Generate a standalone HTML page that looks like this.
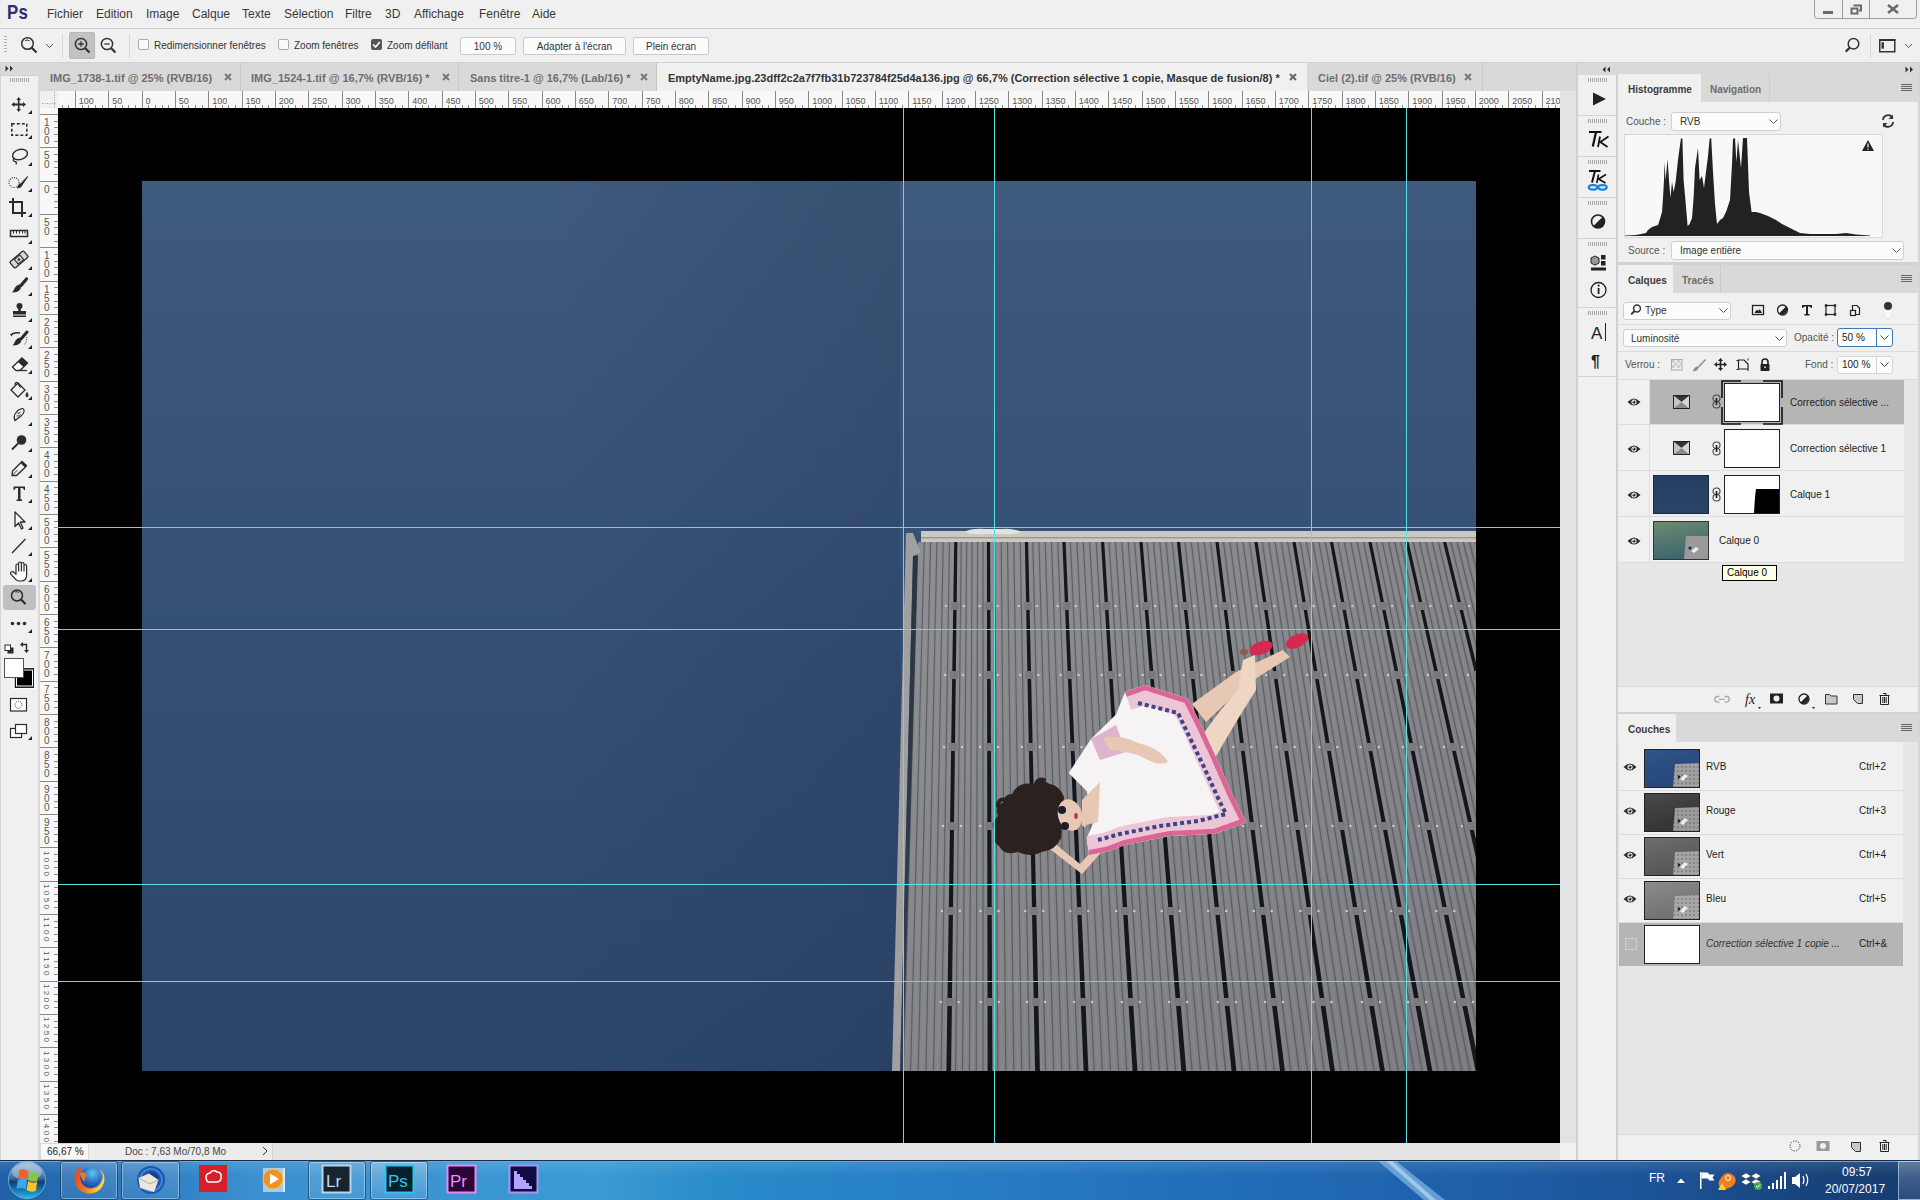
<!DOCTYPE html><html><head><meta charset="utf-8"><style>
*{margin:0;padding:0;box-sizing:border-box}
html,body{width:1920px;height:1200px;overflow:hidden;background:#f0f0f0;font-family:"Liberation Sans",sans-serif}
.a{position:absolute}
.t{position:absolute;white-space:nowrap;line-height:1}
svg{position:absolute;overflow:visible}
</style></head><body><div class="a" style="left:0px;top:0px;width:1920px;height:28px;background:#f0f0f0;"></div>
<div class="a" style="left:0px;top:28px;width:1920px;height:1px;background:#cfcfcf;"></div>
<div class="a" style="left:0px;top:29px;width:1920px;height:33px;background:#f0f0f0;"></div>
<div class="a" style="left:0px;top:62px;width:1920px;height:1px;background:#d2d2d2;"></div>
<div class="a" style="left:40px;top:63px;width:1537px;height:28px;background:#d9d9d9;"></div>
<div class="a" style="left:0px;top:63px;width:40px;height:1097px;background:#f0f0f0;"></div>
<div class="a" style="left:38px;top:63px;width:2px;height:1097px;background:#d9d9d9;"></div>
<div class="a" style="left:40px;top:91px;width:1520px;height:17px;background:#f8f8f8;"></div>
<div class="a" style="left:40px;top:108px;width:18px;height:1035px;background:#f8f8f8;"></div>
<div class="a" style="left:58px;top:108px;width:1502px;height:1035px;background:#000;"></div>
<div class="a" style="left:1560px;top:91px;width:16px;height:1069px;background:#e3e3e3;"></div>
<div class="a" style="left:1560px;top:1143px;width:16px;height:17px;background:#f0f0f0;"></div>
<div class="a" style="left:40px;top:1143px;width:1520px;height:17px;background:#e3e3e3;"></div>
<div class="a" style="left:1576px;top:63px;width:2px;height:1097px;background:#cfcfcf;"></div>
<div class="a" style="left:1578px;top:63px;width:342px;height:1097px;background:#f0f0f0;"></div>
<div class="a" style="left:1616px;top:75px;width:2px;height:1085px;background:#cfcfcf;"></div>
<div class="a" style="left:0px;top:1160px;width:1920px;height:40px;background:#1f5fa8;"></div>
<div class="t" style="left:7px;top:1px;font-size:21px;font-weight:bold;color:#2f2d6e;letter-spacing:0.5px;transform:scaleX(0.8);transform-origin:0 0">Ps</div>
<div class="t" style="left:47px;top:8px;font-size:12px;color:#3a3a3a;">Fichier</div>
<div class="t" style="left:96px;top:8px;font-size:12px;color:#3a3a3a;">Edition</div>
<div class="t" style="left:146px;top:8px;font-size:12px;color:#3a3a3a;">Image</div>
<div class="t" style="left:192px;top:8px;font-size:12px;color:#3a3a3a;">Calque</div>
<div class="t" style="left:242px;top:8px;font-size:12px;color:#3a3a3a;">Texte</div>
<div class="t" style="left:284px;top:8px;font-size:12px;color:#3a3a3a;">Sélection</div>
<div class="t" style="left:345px;top:8px;font-size:12px;color:#3a3a3a;">Filtre</div>
<div class="t" style="left:385px;top:8px;font-size:12px;color:#3a3a3a;">3D</div>
<div class="t" style="left:414px;top:8px;font-size:12px;color:#3a3a3a;">Affichage</div>
<div class="t" style="left:479px;top:8px;font-size:12px;color:#3a3a3a;">Fenêtre</div>
<div class="t" style="left:532px;top:8px;font-size:12px;color:#3a3a3a;">Aide</div>
<svg style="left:1814px;top:0px" width="104" height="20">
<path d="M0.5 0 V15.5 Q0.5 18.5 3.5 18.5 H99.5 Q102.5 18.5 102.5 15.5 V0" fill="none" stroke="#9a9a9a" stroke-width="1"/>
<line x1="28.5" y1="0" x2="28.5" y2="18.5" stroke="#9a9a9a"/>
<line x1="55.5" y1="0" x2="55.5" y2="18.5" stroke="#9a9a9a"/>
<rect x="9" y="11" width="10" height="3" fill="#6a6a6a"/>
<rect x="37.5" y="8.5" width="6" height="5" fill="none" stroke="#6a6a6a" stroke-width="2"/>
<path d="M40.5 6.5 V5.5 H47 V10.5 H45" fill="none" stroke="#6a6a6a" stroke-width="2"/>
<path d="M74 5 L84 13 M84 5 L74 13" stroke="#6a6a6a" stroke-width="2.6"/>
</svg>
<svg style="left:4px;top:35px" width="4" height="20"><path d="M0 1.5h3M0 4.5h3M0 7.5h3M0 10.5h3M0 13.5h3M0 16.5h3" stroke="#b0b0b0" stroke-width="1"/></svg>
<svg style="left:20px;top:36px" width="20" height="20">
<circle cx="7.5" cy="7.5" r="5.8" fill="none" stroke="#333" stroke-width="1.5"/>
<path d="M5 4.6 Q7.5 3.3 9.6 5" fill="none" stroke="#333" stroke-width="1"/>
<line x1="11.6" y1="11.6" x2="16.5" y2="16.5" stroke="#333" stroke-width="2.2"/>
</svg>
<svg style="left:45px;top:42px" width="10" height="8"><path d="M1 2 L4.5 5.5 L8 2" fill="none" stroke="#555" stroke-width="1"/></svg>
<div class="a" style="left:62px;top:34px;width:1px;height:24px;background:#d8d8d8;"></div>
<div class="a" style="left:69px;top:32px;width:26px;height:27px;background:#c2c2c2;border-radius:2px;border:1px solid #b8b8b8"></div>
<svg style="left:74px;top:37px" width="20" height="20">
<circle cx="7" cy="7" r="5.6" fill="none" stroke="#333" stroke-width="1.5"/>
<path d="M4.3 7h5.4M7 4.3v5.4" stroke="#333" stroke-width="1.3"/>
<line x1="11" y1="11" x2="15.5" y2="15.5" stroke="#333" stroke-width="2.2"/>
</svg>
<svg style="left:100px;top:37px" width="20" height="20">
<circle cx="7" cy="7" r="5.6" fill="none" stroke="#333" stroke-width="1.5"/>
<path d="M4.3 7h5.4" stroke="#333" stroke-width="1.3"/>
<line x1="11" y1="11" x2="15.5" y2="15.5" stroke="#333" stroke-width="2.2"/>
</svg>
<div class="a" style="left:129px;top:34px;width:1px;height:24px;background:#d8d8d8;"></div>
<div class="a" style="left:138px;top:39px;width:11px;height:11px;background:#fafafa;border:1px solid #aaa;border-radius:2px"></div>
<div class="t" style="left:154px;top:41px;font-size:10px;color:#333;">Redimensionner fenêtres</div>
<div class="a" style="left:278px;top:39px;width:11px;height:11px;background:#fafafa;border:1px solid #aaa;border-radius:2px"></div>
<div class="t" style="left:294px;top:41px;font-size:10px;color:#333;">Zoom fenêtres</div>
<div class="a" style="left:371px;top:39px;width:11px;height:11px;background:#555;border-radius:2px"></div>
<svg style="left:371px;top:39px" width="11" height="11"><path d="M2.2 5.6 L4.6 8 L8.8 3" fill="none" stroke="#fff" stroke-width="1.6"/></svg>
<div class="t" style="left:387px;top:41px;font-size:10px;color:#333;">Zoom défilant</div>
<div class="a" style="left:460px;top:37px;width:56px;height:18px;background:#fcfcfc;border:1px solid #c9c9c9;border-radius:2px"></div>
<div class="t" style="left:460px;top:42px;width:56px;text-align:center;font-size:10px;color:#333">100 %</div>
<div class="a" style="left:523px;top:37px;width:103px;height:18px;background:#fcfcfc;border:1px solid #c9c9c9;border-radius:2px"></div>
<div class="t" style="left:523px;top:42px;width:103px;text-align:center;font-size:10px;color:#333">Adapter à l'écran</div>
<div class="a" style="left:633px;top:37px;width:76px;height:18px;background:#fcfcfc;border:1px solid #c9c9c9;border-radius:2px"></div>
<div class="t" style="left:633px;top:42px;width:76px;text-align:center;font-size:10px;color:#333">Plein écran</div>
<svg style="left:1844px;top:37px" width="20" height="20">
<circle cx="9.5" cy="6.8" r="5.3" fill="none" stroke="#333" stroke-width="1.5"/>
<line x1="5.6" y1="10.8" x2="1.8" y2="14.6" stroke="#333" stroke-width="2.2"/>
</svg>
<div class="a" style="left:1870px;top:34px;width:1px;height:24px;background:#d8d8d8;"></div>
<svg style="left:1879px;top:39px" width="18" height="14">
<rect x="0.75" y="0.75" width="15" height="12" fill="none" stroke="#333" stroke-width="1.5"/>
<rect x="0" y="0" width="16.5" height="2" fill="#333"/>
<rect x="2.5" y="3.2" width="2.4" height="6.5" fill="#333"/>
</svg>
<svg style="left:1904px;top:42px" width="10" height="8"><path d="M1 2 L4.5 5.5 L8 2" fill="none" stroke="#555" stroke-width="1"/></svg>
<div class="a" style="left:40px;top:63px;width:201px;height:28px;background:#d9d9d9;"></div>
<div class="a" style="left:240px;top:63px;width:1px;height:28px;background:#c6c6c6;"></div>
<div class="t" style="left:50px;top:73px;font-size:11px;color:#6e6e6e;font-weight:bold">IMG_1738-1.tif @ 25% (RVB/16)</div>
<svg style="left:224px;top:73px" width="8" height="8"><path d="M1 1 L7 7 M7 1 L1 7" stroke="#777" stroke-width="2"/></svg>
<div class="a" style="left:241px;top:63px;width:218px;height:28px;background:#d9d9d9;"></div>
<div class="a" style="left:458px;top:63px;width:1px;height:28px;background:#c6c6c6;"></div>
<div class="t" style="left:251px;top:73px;font-size:11px;color:#6e6e6e;font-weight:bold">IMG_1524-1.tif @ 16,7% (RVB/16) *</div>
<svg style="left:442px;top:73px" width="8" height="8"><path d="M1 1 L7 7 M7 1 L1 7" stroke="#777" stroke-width="2"/></svg>
<div class="a" style="left:459px;top:63px;width:198px;height:28px;background:#d9d9d9;"></div>
<div class="a" style="left:656px;top:63px;width:1px;height:28px;background:#c6c6c6;"></div>
<div class="t" style="left:470px;top:73px;font-size:11px;color:#6e6e6e;font-weight:bold">Sans titre-1 @ 16,7% (Lab/16) *</div>
<svg style="left:640px;top:73px" width="8" height="8"><path d="M1 1 L7 7 M7 1 L1 7" stroke="#777" stroke-width="2"/></svg>
<div class="a" style="left:657px;top:63px;width:650px;height:28px;background:#f0f0f0;"></div>
<div class="t" style="left:668px;top:73px;font-size:11px;color:#333;font-weight:bold">EmptyName.jpg.23dff2c2a7f7fb31b723784f25d4a136.jpg @ 66,7% (Correction sélective 1 copie, Masque de fusion/8) *</div>
<svg style="left:1289px;top:73px" width="8" height="8"><path d="M1 1 L7 7 M7 1 L1 7" stroke="#666" stroke-width="2"/></svg>
<div class="a" style="left:1307px;top:63px;width:176px;height:28px;background:#d9d9d9;"></div>
<div class="a" style="left:1482px;top:63px;width:1px;height:28px;background:#c6c6c6;"></div>
<div class="t" style="left:1318px;top:73px;font-size:11px;color:#6e6e6e;font-weight:bold">Ciel (2).tif @ 25% (RVB/16)</div>
<svg style="left:1464px;top:73px" width="8" height="8"><path d="M1 1 L7 7 M7 1 L1 7" stroke="#777" stroke-width="2"/></svg>
<svg style="left:0px;top:91px" width="1560" height="17"><path d="M62.00 14V17 M68.67 14V17 M75.33 0V17 M82.00 14V17 M88.67 14V17 M95.33 14V17 M102.00 14V17 M108.67 0V17 M115.33 14V17 M122.00 14V17 M128.67 14V17 M135.33 14V17 M142.00 0V17 M148.67 14V17 M155.33 14V17 M162.00 14V17 M168.67 14V17 M175.33 0V17 M182.00 14V17 M188.67 14V17 M195.33 14V17 M202.00 14V17 M208.67 0V17 M215.33 14V17 M222.00 14V17 M228.67 14V17 M235.33 14V17 M242.00 0V17 M248.67 14V17 M255.33 14V17 M262.00 14V17 M268.67 14V17 M275.33 0V17 M282.00 14V17 M288.67 14V17 M295.33 14V17 M302.00 14V17 M308.67 0V17 M315.33 14V17 M322.00 14V17 M328.67 14V17 M335.33 14V17 M342.00 0V17 M348.67 14V17 M355.33 14V17 M362.00 14V17 M368.67 14V17 M375.33 0V17 M382.00 14V17 M388.67 14V17 M395.33 14V17 M402.00 14V17 M408.67 0V17 M415.33 14V17 M422.00 14V17 M428.67 14V17 M435.33 14V17 M442.00 0V17 M448.67 14V17 M455.33 14V17 M462.00 14V17 M468.67 14V17 M475.33 0V17 M482.00 14V17 M488.67 14V17 M495.33 14V17 M502.00 14V17 M508.67 0V17 M515.33 14V17 M522.00 14V17 M528.67 14V17 M535.33 14V17 M542.00 0V17 M548.67 14V17 M555.33 14V17 M562.00 14V17 M568.67 14V17 M575.33 0V17 M582.00 14V17 M588.67 14V17 M595.33 14V17 M602.00 14V17 M608.67 0V17 M615.33 14V17 M622.00 14V17 M628.67 14V17 M635.33 14V17 M642.00 0V17 M648.67 14V17 M655.33 14V17 M662.00 14V17 M668.67 14V17 M675.33 0V17 M682.00 14V17 M688.67 14V17 M695.33 14V17 M702.00 14V17 M708.67 0V17 M715.33 14V17 M722.00 14V17 M728.67 14V17 M735.33 14V17 M742.00 0V17 M748.67 14V17 M755.33 14V17 M762.00 14V17 M768.67 14V17 M775.33 0V17 M782.00 14V17 M788.67 14V17 M795.33 14V17 M802.00 14V17 M808.67 0V17 M815.33 14V17 M822.00 14V17 M828.67 14V17 M835.33 14V17 M842.00 0V17 M848.67 14V17 M855.33 14V17 M862.00 14V17 M868.67 14V17 M875.33 0V17 M882.00 14V17 M888.67 14V17 M895.33 14V17 M902.00 14V17 M908.67 0V17 M915.33 14V17 M922.00 14V17 M928.67 14V17 M935.33 14V17 M942.00 0V17 M948.67 14V17 M955.33 14V17 M962.00 14V17 M968.67 14V17 M975.33 0V17 M982.00 14V17 M988.67 14V17 M995.33 14V17 M1002.00 14V17 M1008.67 0V17 M1015.33 14V17 M1022.00 14V17 M1028.67 14V17 M1035.33 14V17 M1042.00 0V17 M1048.67 14V17 M1055.33 14V17 M1062.00 14V17 M1068.67 14V17 M1075.33 0V17 M1082.00 14V17 M1088.67 14V17 M1095.33 14V17 M1102.00 14V17 M1108.67 0V17 M1115.33 14V17 M1122.00 14V17 M1128.67 14V17 M1135.33 14V17 M1142.00 0V17 M1148.67 14V17 M1155.33 14V17 M1162.00 14V17 M1168.67 14V17 M1175.33 0V17 M1182.00 14V17 M1188.67 14V17 M1195.33 14V17 M1202.00 14V17 M1208.67 0V17 M1215.33 14V17 M1222.00 14V17 M1228.67 14V17 M1235.33 14V17 M1242.00 0V17 M1248.67 14V17 M1255.33 14V17 M1262.00 14V17 M1268.67 14V17 M1275.33 0V17 M1282.00 14V17 M1288.67 14V17 M1295.33 14V17 M1302.00 14V17 M1308.67 0V17 M1315.33 14V17 M1322.00 14V17 M1328.67 14V17 M1335.33 14V17 M1342.00 0V17 M1348.67 14V17 M1355.33 14V17 M1362.00 14V17 M1368.67 14V17 M1375.33 0V17 M1382.00 14V17 M1388.67 14V17 M1395.33 14V17 M1402.00 14V17 M1408.67 0V17 M1415.33 14V17 M1422.00 14V17 M1428.67 14V17 M1435.33 14V17 M1442.00 0V17 M1448.67 14V17 M1455.33 14V17 M1462.00 14V17 M1468.67 14V17 M1475.33 0V17 M1482.00 14V17 M1488.67 14V17 M1495.33 14V17 M1502.00 14V17 M1508.67 0V17 M1515.33 14V17 M1522.00 14V17 M1528.67 14V17 M1535.33 14V17 M1542.00 0V17 M1548.67 14V17 M1555.33 14V17" stroke="#8a8a8a" stroke-width="1" shape-rendering="crispEdges"/></svg>
<div class="t" style="left:78.8px;top:97px;font-size:9px;color:#555;max-width:1481px;overflow:hidden">100</div>
<div class="t" style="left:112.2px;top:97px;font-size:9px;color:#555;max-width:1448px;overflow:hidden">50</div>
<div class="t" style="left:145.5px;top:97px;font-size:9px;color:#555;max-width:1414px;overflow:hidden">0</div>
<div class="t" style="left:178.8px;top:97px;font-size:9px;color:#555;max-width:1381px;overflow:hidden">50</div>
<div class="t" style="left:212.2px;top:97px;font-size:9px;color:#555;max-width:1348px;overflow:hidden">100</div>
<div class="t" style="left:245.5px;top:97px;font-size:9px;color:#555;max-width:1314px;overflow:hidden">150</div>
<div class="t" style="left:278.8px;top:97px;font-size:9px;color:#555;max-width:1281px;overflow:hidden">200</div>
<div class="t" style="left:312.2px;top:97px;font-size:9px;color:#555;max-width:1248px;overflow:hidden">250</div>
<div class="t" style="left:345.5px;top:97px;font-size:9px;color:#555;max-width:1214px;overflow:hidden">300</div>
<div class="t" style="left:378.8px;top:97px;font-size:9px;color:#555;max-width:1181px;overflow:hidden">350</div>
<div class="t" style="left:412.2px;top:97px;font-size:9px;color:#555;max-width:1148px;overflow:hidden">400</div>
<div class="t" style="left:445.5px;top:97px;font-size:9px;color:#555;max-width:1114px;overflow:hidden">450</div>
<div class="t" style="left:478.8px;top:97px;font-size:9px;color:#555;max-width:1081px;overflow:hidden">500</div>
<div class="t" style="left:512.2px;top:97px;font-size:9px;color:#555;max-width:1048px;overflow:hidden">550</div>
<div class="t" style="left:545.5px;top:97px;font-size:9px;color:#555;max-width:1014px;overflow:hidden">600</div>
<div class="t" style="left:578.8px;top:97px;font-size:9px;color:#555;max-width:981px;overflow:hidden">650</div>
<div class="t" style="left:612.2px;top:97px;font-size:9px;color:#555;max-width:948px;overflow:hidden">700</div>
<div class="t" style="left:645.5px;top:97px;font-size:9px;color:#555;max-width:914px;overflow:hidden">750</div>
<div class="t" style="left:678.8px;top:97px;font-size:9px;color:#555;max-width:881px;overflow:hidden">800</div>
<div class="t" style="left:712.2px;top:97px;font-size:9px;color:#555;max-width:848px;overflow:hidden">850</div>
<div class="t" style="left:745.5px;top:97px;font-size:9px;color:#555;max-width:814px;overflow:hidden">900</div>
<div class="t" style="left:778.8px;top:97px;font-size:9px;color:#555;max-width:781px;overflow:hidden">950</div>
<div class="t" style="left:812.2px;top:97px;font-size:9px;color:#555;max-width:748px;overflow:hidden">1000</div>
<div class="t" style="left:845.5px;top:97px;font-size:9px;color:#555;max-width:714px;overflow:hidden">1050</div>
<div class="t" style="left:878.8px;top:97px;font-size:9px;color:#555;max-width:681px;overflow:hidden">1100</div>
<div class="t" style="left:912.2px;top:97px;font-size:9px;color:#555;max-width:648px;overflow:hidden">1150</div>
<div class="t" style="left:945.5px;top:97px;font-size:9px;color:#555;max-width:614px;overflow:hidden">1200</div>
<div class="t" style="left:978.8px;top:97px;font-size:9px;color:#555;max-width:581px;overflow:hidden">1250</div>
<div class="t" style="left:1012.2px;top:97px;font-size:9px;color:#555;max-width:548px;overflow:hidden">1300</div>
<div class="t" style="left:1045.5px;top:97px;font-size:9px;color:#555;max-width:514px;overflow:hidden">1350</div>
<div class="t" style="left:1078.8px;top:97px;font-size:9px;color:#555;max-width:481px;overflow:hidden">1400</div>
<div class="t" style="left:1112.2px;top:97px;font-size:9px;color:#555;max-width:448px;overflow:hidden">1450</div>
<div class="t" style="left:1145.5px;top:97px;font-size:9px;color:#555;max-width:414px;overflow:hidden">1500</div>
<div class="t" style="left:1178.8px;top:97px;font-size:9px;color:#555;max-width:381px;overflow:hidden">1550</div>
<div class="t" style="left:1212.2px;top:97px;font-size:9px;color:#555;max-width:348px;overflow:hidden">1600</div>
<div class="t" style="left:1245.5px;top:97px;font-size:9px;color:#555;max-width:314px;overflow:hidden">1650</div>
<div class="t" style="left:1278.8px;top:97px;font-size:9px;color:#555;max-width:281px;overflow:hidden">1700</div>
<div class="t" style="left:1312.2px;top:97px;font-size:9px;color:#555;max-width:248px;overflow:hidden">1750</div>
<div class="t" style="left:1345.5px;top:97px;font-size:9px;color:#555;max-width:214px;overflow:hidden">1800</div>
<div class="t" style="left:1378.8px;top:97px;font-size:9px;color:#555;max-width:181px;overflow:hidden">1850</div>
<div class="t" style="left:1412.2px;top:97px;font-size:9px;color:#555;max-width:148px;overflow:hidden">1900</div>
<div class="t" style="left:1445.5px;top:97px;font-size:9px;color:#555;max-width:114px;overflow:hidden">1950</div>
<div class="t" style="left:1478.8px;top:97px;font-size:9px;color:#555;max-width:81px;overflow:hidden">2000</div>
<div class="t" style="left:1512.2px;top:97px;font-size:9px;color:#555;max-width:48px;overflow:hidden">2050</div>
<div class="t" style="left:1545.5px;top:97px;font-size:9px;color:#555;max-width:14px;overflow:hidden">2100</div>
<svg style="left:40px;top:0px" width="18" height="1143"><path d="M0 114.33H18 M14 121.00H18 M14 127.67H18 M14 134.33H18 M14 141.00H18 M0 147.67H18 M14 154.33H18 M14 161.00H18 M14 167.67H18 M14 174.33H18 M0 181.00H18 M14 187.67H18 M14 194.33H18 M14 201.00H18 M14 207.67H18 M0 214.33H18 M14 221.00H18 M14 227.67H18 M14 234.33H18 M14 241.00H18 M0 247.67H18 M14 254.33H18 M14 261.00H18 M14 267.67H18 M14 274.33H18 M0 281.00H18 M14 287.67H18 M14 294.33H18 M14 301.00H18 M14 307.67H18 M0 314.33H18 M14 321.00H18 M14 327.67H18 M14 334.33H18 M14 341.00H18 M0 347.67H18 M14 354.33H18 M14 361.00H18 M14 367.67H18 M14 374.33H18 M0 381.00H18 M14 387.67H18 M14 394.33H18 M14 401.00H18 M14 407.67H18 M0 414.33H18 M14 421.00H18 M14 427.67H18 M14 434.33H18 M14 441.00H18 M0 447.67H18 M14 454.33H18 M14 461.00H18 M14 467.67H18 M14 474.33H18 M0 481.00H18 M14 487.67H18 M14 494.33H18 M14 501.00H18 M14 507.67H18 M0 514.33H18 M14 521.00H18 M14 527.67H18 M14 534.33H18 M14 541.00H18 M0 547.67H18 M14 554.33H18 M14 561.00H18 M14 567.67H18 M14 574.33H18 M0 581.00H18 M14 587.67H18 M14 594.33H18 M14 601.00H18 M14 607.67H18 M0 614.33H18 M14 621.00H18 M14 627.67H18 M14 634.33H18 M14 641.00H18 M0 647.67H18 M14 654.33H18 M14 661.00H18 M14 667.67H18 M14 674.33H18 M0 681.00H18 M14 687.67H18 M14 694.33H18 M14 701.00H18 M14 707.67H18 M0 714.33H18 M14 721.00H18 M14 727.67H18 M14 734.33H18 M14 741.00H18 M0 747.67H18 M14 754.33H18 M14 761.00H18 M14 767.67H18 M14 774.33H18 M0 781.00H18 M14 787.67H18 M14 794.33H18 M14 801.00H18 M14 807.67H18 M0 814.33H18 M14 821.00H18 M14 827.67H18 M14 834.33H18 M14 841.00H18 M0 847.67H18 M14 854.33H18 M14 861.00H18 M14 867.67H18 M14 874.33H18 M0 881.00H18 M14 887.67H18 M14 894.33H18 M14 901.00H18 M14 907.67H18 M0 914.33H18 M14 921.00H18 M14 927.67H18 M14 934.33H18 M14 941.00H18 M0 947.67H18 M14 954.33H18 M14 961.00H18 M14 967.67H18 M14 974.33H18 M0 981.00H18 M14 987.67H18 M14 994.33H18 M14 1001.00H18 M14 1007.67H18 M0 1014.33H18 M14 1021.00H18 M14 1027.67H18 M14 1034.33H18 M14 1041.00H18 M0 1047.67H18 M14 1054.33H18 M14 1061.00H18 M14 1067.67H18 M14 1074.33H18 M0 1081.00H18 M14 1087.67H18 M14 1094.33H18 M14 1101.00H18 M14 1107.67H18 M0 1114.33H18 M14 1121.00H18 M14 1127.67H18 M14 1134.33H18 M14 1141.00H18" stroke="#8a8a8a" stroke-width="1" shape-rendering="crispEdges"/></svg>
<div class="t" style="left:44px;top:117.8px;font-size:10px;line-height:9px;color:#555;white-space:normal;width:8px">1<br>0<br>0</div>
<div class="t" style="left:44px;top:151.2px;font-size:10px;line-height:9px;color:#555;white-space:normal;width:8px">5<br>0</div>
<div class="t" style="left:44px;top:184.5px;font-size:10px;line-height:9px;color:#555;white-space:normal;width:8px">0</div>
<div class="t" style="left:44px;top:217.8px;font-size:10px;line-height:9px;color:#555;white-space:normal;width:8px">5<br>0</div>
<div class="t" style="left:44px;top:251.2px;font-size:10px;line-height:9px;color:#555;white-space:normal;width:8px">1<br>0<br>0</div>
<div class="t" style="left:44px;top:284.5px;font-size:10px;line-height:9px;color:#555;white-space:normal;width:8px">1<br>5<br>0</div>
<div class="t" style="left:44px;top:317.8px;font-size:10px;line-height:9px;color:#555;white-space:normal;width:8px">2<br>0<br>0</div>
<div class="t" style="left:44px;top:351.2px;font-size:10px;line-height:9px;color:#555;white-space:normal;width:8px">2<br>5<br>0</div>
<div class="t" style="left:44px;top:384.5px;font-size:10px;line-height:9px;color:#555;white-space:normal;width:8px">3<br>0<br>0</div>
<div class="t" style="left:44px;top:417.8px;font-size:10px;line-height:9px;color:#555;white-space:normal;width:8px">3<br>5<br>0</div>
<div class="t" style="left:44px;top:451.2px;font-size:10px;line-height:9px;color:#555;white-space:normal;width:8px">4<br>0<br>0</div>
<div class="t" style="left:44px;top:484.5px;font-size:10px;line-height:9px;color:#555;white-space:normal;width:8px">4<br>5<br>0</div>
<div class="t" style="left:44px;top:517.8px;font-size:10px;line-height:9px;color:#555;white-space:normal;width:8px">5<br>0<br>0</div>
<div class="t" style="left:44px;top:551.2px;font-size:10px;line-height:9px;color:#555;white-space:normal;width:8px">5<br>5<br>0</div>
<div class="t" style="left:44px;top:584.5px;font-size:10px;line-height:9px;color:#555;white-space:normal;width:8px">6<br>0<br>0</div>
<div class="t" style="left:44px;top:617.8px;font-size:10px;line-height:9px;color:#555;white-space:normal;width:8px">6<br>5<br>0</div>
<div class="t" style="left:44px;top:651.2px;font-size:10px;line-height:9px;color:#555;white-space:normal;width:8px">7<br>0<br>0</div>
<div class="t" style="left:44px;top:684.5px;font-size:10px;line-height:9px;color:#555;white-space:normal;width:8px">7<br>5<br>0</div>
<div class="t" style="left:44px;top:717.8px;font-size:10px;line-height:9px;color:#555;white-space:normal;width:8px">8<br>0<br>0</div>
<div class="t" style="left:44px;top:751.2px;font-size:10px;line-height:9px;color:#555;white-space:normal;width:8px">8<br>5<br>0</div>
<div class="t" style="left:44px;top:784.5px;font-size:10px;line-height:9px;color:#555;white-space:normal;width:8px">9<br>0<br>0</div>
<div class="t" style="left:44px;top:817.8px;font-size:10px;line-height:9px;color:#555;white-space:normal;width:8px">9<br>5<br>0</div>
<div class="t" style="left:42px;top:850.7px;font-size:8px;line-height:8px;letter-spacing:2.4px;color:#555;writing-mode:vertical-rl">1000</div>
<div class="t" style="left:42px;top:884.0px;font-size:8px;line-height:8px;letter-spacing:2.4px;color:#555;writing-mode:vertical-rl">1050</div>
<div class="t" style="left:42px;top:917.3px;font-size:8px;line-height:8px;letter-spacing:2.4px;color:#555;writing-mode:vertical-rl">1100</div>
<div class="t" style="left:42px;top:950.7px;font-size:8px;line-height:8px;letter-spacing:2.4px;color:#555;writing-mode:vertical-rl">1150</div>
<div class="t" style="left:42px;top:984.0px;font-size:8px;line-height:8px;letter-spacing:2.4px;color:#555;writing-mode:vertical-rl">1200</div>
<div class="t" style="left:42px;top:1017.3px;font-size:8px;line-height:8px;letter-spacing:2.4px;color:#555;writing-mode:vertical-rl">1250</div>
<div class="t" style="left:42px;top:1050.7px;font-size:8px;line-height:8px;letter-spacing:2.4px;color:#555;writing-mode:vertical-rl">1300</div>
<div class="t" style="left:42px;top:1084.0px;font-size:8px;line-height:8px;letter-spacing:2.4px;color:#555;writing-mode:vertical-rl">1350</div>
<div class="t" style="left:42px;top:1117.3px;font-size:8px;line-height:8px;letter-spacing:2.4px;color:#555;writing-mode:vertical-rl">1400</div>
<div class="a" style="left:40px;top:91px;width:18px;height:17px;background:#f0f0f0;"></div>
<svg style="left:40px;top:91px" width="18" height="17"><path d="M2 12.5H17M14.5 1V17" stroke="#999" stroke-width="1" stroke-dasharray="1 1.5" fill="none"/></svg>
<div class="a" style="left:0px;top:63px;width:1px;height:1097px;background:#d4d4d4;"></div>
<div class="a" style="left:1px;top:63px;width:37px;height:12px;background:#dadada;"></div>
<svg style="left:5px;top:65px" width="12" height="8"><path d="M0.5 0.5 L3.5 3.5 L0.5 6.5Z M5 0.5 L8 3.5 L5 6.5Z" fill="#333"/></svg>
<svg style="left:10px;top:78px" width="20" height="5"><path d="M0.5 0V4M2.5 0V4M4.5 0V4M6.5 0V4M8.5 0V4M10.5 0V4M12.5 0V4M14.5 0V4M16.5 0V4M18.5 0V4" stroke="#a8a8a8" stroke-width="1"/></svg>
<div class="a" style="left:1px;top:75px;width:37px;height:1px;background:#d0d0d0;"></div>
<div class="a" style="left:3px;top:585px;width:33px;height:25px;background:#c0c0c0;border-radius:3px"></div>
<svg style="left:0px;top:0px" width="40" height="760"><path d="M18.7 97 L21 100 H19.5 V103.5 H23 V102 L26 104.5 L23 107 V105.5 H19.5 V109 H21 L18.7 112 L16.4 109 H17.9 V105.5 H14.4 V107 L11.4 104.5 L14.4 102 V103.5 H17.9 V100 H16.4Z" fill="#2b2b2b"/><path d="M32 110V114H28Z" fill="#222"/><rect x="11.8" y="123.8" width="15" height="11.5" fill="none" stroke="#2b2b2b" stroke-width="1.5" stroke-dasharray="3 2"/><path d="M32 135V139H28Z" fill="#222"/><ellipse cx="20" cy="154.5" rx="7.6" ry="5" transform="rotate(-15 20 154.5)" fill="none" stroke="#2b2b2b" stroke-width="1.4"/><path d="M14 158 q-2 3 1 3.5 q2 0 1 3" fill="none" stroke="#2b2b2b" stroke-width="1.3"/><path d="M32 162V166H28Z" fill="#222"/><circle cx="14" cy="182.5" r="5" fill="none" stroke="#2b2b2b" stroke-width="1.1" stroke-dasharray="1 1.3"/><path d="M27.5 176 L21 183 q-3 1 -4 5.5 q4.5 -0.5 5.5 -3.5 L28 177Z" fill="#2b2b2b"/><path d="M32 188V192H28Z" fill="#222"/><path d="M13 198 V213 H26 M9 202 H22 V217" fill="none" stroke="#2b2b2b" stroke-width="2"/><path d="M32 213V217H28Z" fill="#222"/><rect x="10.5" y="230.5" width="17" height="6" fill="none" stroke="#2b2b2b" stroke-width="1.5"/><path d="M13.5 231V233.5M16.5 231V233.5M19.5 231V233.5M22.5 231V233.5M25 231V233.5" stroke="#2b2b2b" stroke-width="1"/><path d="M32 240V244H28Z" fill="#222"/><g transform="rotate(-40 19 259.5)"><rect x="10" y="255.5" width="18" height="8" rx="1.5" fill="#d8d8d8" stroke="#2b2b2b" stroke-width="1.3"/><rect x="15.5" y="256.5" width="7" height="6" fill="none" stroke="#2b2b2b" stroke-width="1"/><circle cx="19" cy="259.5" r="1.3" fill="#2b2b2b"/></g><path d="M32 266V270H28Z" fill="#222"/><path d="M26.5 279 L21 285.5" stroke="#2b2b2b" stroke-width="3.2" stroke-linecap="round"/><path d="M20.5 284.5 q-3.5 -0.3 -5.3 2.8 q-1.4 2.8 -3 5.2 q4.8 0.2 7.3 -2.3 q2.3 -2.4 1 -5.7z" fill="#2b2b2b"/><path d="M32 292V296H28Z" fill="#222"/><circle cx="19.5" cy="306" r="3" fill="#2b2b2b"/><path d="M18.2 308 V311 H13 V314.5 H26 V311 H20.8 V308Z" fill="#2b2b2b"/><rect x="13" y="315.5" width="13" height="1.5" fill="#2b2b2b"/><path d="M32 318V322H28Z" fill="#222"/><path d="M27 332 L21.5 338.5" stroke="#2b2b2b" stroke-width="3" stroke-linecap="round"/><path d="M21 337.5 q-3.5 -0.3 -5.3 2.8 q-1.4 2.8 -3 5.2 q4.8 0.2 7.3 -2.3 q2.3 -2.4 1 -5.7z" fill="#2b2b2b"/><path d="M20 333 q-6 -1 -9 2" fill="none" stroke="#2b2b2b" stroke-width="1.3"/><path d="M10 334 l3 -0.5 l-1.5 3z" fill="#2b2b2b"/><path d="M27 337 l-1 5 l-2 3" fill="none" stroke="#2b2b2b" stroke-width="1" stroke-dasharray="1 1.3"/><path d="M32 345V349H28Z" fill="#222"/><path d="M22 358 L27.5 363 L20 370.5 H16 L12.5 367Z" fill="#fff" stroke="#2b2b2b" stroke-width="1.3"/><path d="M22 358 L27.5 363 L23.5 367 L18 362Z" fill="#2b2b2b"/><path d="M20 370.5 H27" stroke="#2b2b2b" stroke-width="1.2"/><path d="M32 370V374H28Z" fill="#222"/><path d="M11 390 L18 383 L25 390 L18 397Z" fill="none" stroke="#2b2b2b" stroke-width="1.3"/><path d="M15 385 q0 -3 2 -2.5 l3.5 5" fill="none" stroke="#2b2b2b" stroke-width="1.2"/><path d="M27 393 q-1.5 2.5 0 3.5 q1.5 -1 0 -3.5Z" fill="#2b2b2b" stroke="#2b2b2b" stroke-width="1.4"/><path d="M32 396V400H28Z" fill="#222"/><path d="M15 420.5 q-2 -4 1 -8 q2 -3 6 -4 q2.5 0 2 3 q-0.5 3 -3 4.5 q-2 1.5 -6 4.5Z" fill="none" stroke="#2b2b2b" stroke-width="1.2"/><path d="M17 413 q2 1 3.5 -1 M16.5 416 q2 0.5 4 -1.5" fill="none" stroke="#2b2b2b" stroke-width="0.9"/><path d="M32 422V426H28Z" fill="#222"/><circle cx="21.5" cy="440" r="4.8" fill="#2b2b2b"/><path d="M18 443.5 L12 449.5" stroke="#2b2b2b" stroke-width="1.8"/><path d="M32 448V452H28Z" fill="#222"/><path d="M22 461.5 L26.5 465.5 L25 467.5 L16.5 475.5 L12 475.5 L12.5 471 L20.5 463Z" fill="none" stroke="#2b2b2b" stroke-width="1.3"/><path d="M22 461.5 L26.5 465.5 L25 467.5 L20.5 463Z" fill="#2b2b2b"/><path d="M12.5 475 L17.5 470" stroke="#2b2b2b" stroke-width="0.9"/><path d="M32 474V478H28Z" fill="#222"/><path d="M13.5 486.5 H25 V490 H24 Q23.5 488 22 488 H20.5 V499.5 H22 V501 H16.5 V499.5 H18 V488 H16.5 Q15 488 14.5 490 H13.5Z" fill="#2b2b2b"/><path d="M32 499V503H28Z" fill="#222"/><path d="M15 512 V526.5 L18.5 523 L21.5 529 L23 528 L20.2 522 H25Z" fill="#fff" stroke="#2b2b2b" stroke-width="1.3" stroke-linejoin="round"/><path d="M32 526V530H28Z" fill="#222"/><path d="M12 553 L25.5 539" stroke="#2b2b2b" stroke-width="1.3"/><path d="M32 552V556H28Z" fill="#222"/><path d="M14.5 578 L11.2 574.6 Q9.8 573 11.3 572 Q12.8 571.2 14.3 572.7 L16 574.4 V565.5 Q16 564 17.3 564 Q18.6 564 18.6 565.5 V571 V563.5 Q18.6 562 20 562 Q21.4 562 21.4 563.5 V571 V564 Q21.4 562.5 22.7 562.5 Q24 562.5 24 564 V571 V566 Q24 564.5 25.3 564.5 Q26.6 564.5 26.6 566 V575 Q26.6 581 21 581 H19.5 Q16.5 581 14.5 578 Z" fill="#fff" stroke="#2b2b2b" stroke-width="1.2" stroke-linejoin="round"/><path d="M32 578V582H28Z" fill="#222"/><circle cx="17" cy="595.5" r="5.5" fill="none" stroke="#2b2b2b" stroke-width="1.5"/><path d="M15 592 q2 -1 4 0.5" fill="none" stroke="#2b2b2b" stroke-width="0.9"/><path d="M21 599.5 L25.5 604" stroke="#2b2b2b" stroke-width="2.2"/><circle cx="12.5" cy="623.5" r="1.8" fill="#2b2b2b"/><circle cx="18.5" cy="623.5" r="1.8" fill="#2b2b2b"/><circle cx="24.5" cy="623.5" r="1.8" fill="#2b2b2b"/><path d="M32 629V633H28Z" fill="#222"/><rect x="7.5" y="647.5" width="6" height="6" fill="#2b2b2b"/><rect x="5" y="645" width="5.5" height="5.5" fill="#fff" stroke="#2b2b2b" stroke-width="1"/><path d="M22.5 644.5 H26.5 V650" fill="none" stroke="#2b2b2b" stroke-width="1.4"/><path d="M20 644.5 L23 642 V647Z M26.5 653 L24 650 H29Z" fill="#2b2b2b"/><rect x="15" y="668.5" width="18.5" height="19" fill="#000" stroke="#222" stroke-width="1"/><rect x="14" y="667.5" width="21" height="21" fill="none" stroke="#fff" stroke-width="1"/><rect x="16.5" y="670" width="16" height="16" fill="none" stroke="#fff" stroke-width="1"/><rect x="4.5" y="658.5" width="19" height="19" fill="#fff" stroke="#555" stroke-width="1"/><rect x="10.5" y="698.5" width="16" height="12.5" fill="#fff" stroke="#2b2b2b" stroke-width="1.2"/><circle cx="18.5" cy="704.8" r="3.5" fill="none" stroke="#2b2b2b" stroke-width="1" stroke-dasharray="1 1.2"/><rect x="10.5" y="728.5" width="11" height="9" fill="#fff" stroke="#2b2b2b" stroke-width="1.2"/><rect x="15.5" y="724.5" width="11" height="9" fill="#fff" stroke="#2b2b2b" stroke-width="1.2"/><path d="M32 736V740H28Z" fill="#222"/></svg>
<svg style="left:0px;top:0px" width="1920" height="1200"><defs><clipPath id="pc"><rect x="142" y="181" width="1334" height="890"/></clipPath><linearGradient id="wg" x1="0" y1="0" x2="0" y2="1"><stop offset="0" stop-color="#3e5a7c"/><stop offset="0.5" stop-color="#344f74"/><stop offset="1" stop-color="#2c466a"/></linearGradient><linearGradient id="wd" x1="0" y1="0" x2="1" y2="0"><stop offset="0" stop-color="#1c2f4e" stop-opacity="0"/><stop offset="1" stop-color="#1c2f4e" stop-opacity="0.22"/></linearGradient><linearGradient id="pg" x1="0" y1="0" x2="0" y2="1"><stop offset="0" stop-color="#2a2e33" stop-opacity="0.85"/><stop offset="1" stop-color="#2a2e33" stop-opacity="0.35"/></linearGradient><linearGradient id="dg" x1="0" y1="0" x2="1" y2="1"><stop offset="0" stop-color="#8c8d91"/><stop offset="1" stop-color="#7a7b80"/></linearGradient></defs><g clip-path="url(#pc)"><rect x="142" y="181" width="1334" height="890" fill="url(#wg)"/><rect x="560" y="181" width="340" height="890" fill="url(#wd)"/><path d="M918 542 L1476 542 L1476 1071 L903 1071 Z" fill="url(#dg)"/><path d="M906 533 L913 533 L921 553 L913 556 L900 1071 L892 1071 Z" fill="#a0a0a0"/><path d="M913 556 L918 556 L904 1071 L900 1071 Z" fill="url(#pg)"/><rect x="921" y="531" width="555" height="11" fill="#cac8c0"/><rect x="921" y="537" width="555" height="1.5" fill="#9c9a92"/><path d="M965 532 q5 -4 22 -3 h15 q10 -1 20 3 q-10 3 -20 2 h-15 q-17 1 -22 -2z" fill="#e4e2dc"/><path d="M924.3 542L910.6 1071 M930.6 542L918.2 1071 M936.9 542L925.9 1071 M943.2 542L933.5 1071 M949.5 542L941.1 1071 M961.2 542L955.6 1071 M966.7 542L962.5 1071 M972.1 542L969.4 1071 M977.6 542L976.2 1071 M983.0 542L983.1 1071 M994.8 542L997.9 1071 M1001.2 542L1005.8 1071 M1007.5 542L1013.8 1071 M1013.8 542L1021.7 1071 M1020.2 542L1029.6 1071 M1032.8 542L1045.6 1071 M1039.0 542L1053.7 1071 M1045.2 542L1061.8 1071 M1051.5 542L1069.8 1071 M1057.8 542L1077.9 1071 M1070.4 542L1094.2 1071 M1076.9 542L1102.3 1071 M1083.3 542L1110.5 1071 M1089.7 542L1118.7 1071 M1096.2 542L1126.8 1071 M1109.0 542L1143.1 1071 M1115.4 542L1151.2 1071 M1121.8 542L1159.4 1071 M1128.2 542L1167.5 1071 M1134.6 542L1175.6 1071 M1147.2 542L1192.1 1071 M1153.5 542L1200.5 1071 M1159.8 542L1208.9 1071 M1166.0 542L1217.2 1071 M1172.2 542L1225.6 1071 M1184.9 542L1242.1 1071 M1191.3 542L1250.2 1071 M1197.8 542L1258.2 1071 M1204.2 542L1266.3 1071 M1210.6 542L1274.4 1071 M1223.5 542L1290.8 1071 M1230.0 542L1299.2 1071 M1236.5 542L1307.5 1071 M1243.0 542L1315.8 1071 M1249.5 542L1324.2 1071 M1262.3 542L1340.8 1071 M1268.7 542L1349.2 1071 M1275.0 542L1357.5 1071 M1281.3 542L1365.8 1071 M1287.7 542L1374.2 1071 M1300.2 542L1390.4 1071 M1306.5 542L1398.3 1071 M1312.8 542L1406.2 1071 M1319.0 542L1414.2 1071 M1325.2 542L1422.1 1071 M1337.9 542L1438.0 1071 M1344.3 542L1446.0 1071 M1350.8 542L1454.0 1071 M1357.2 542L1462.0 1071 M1363.6 542L1470.0 1071 M1376.2 542L1486.0 1071 M1382.3 542L1494.0 1071 M1388.5 542L1502.0 1071 M1394.7 542L1510.0 1071 M1400.8 542L1518.0 1071 M1413.3 542L1534.0 1071 M1419.5 542L1542.0 1071 M1425.8 542L1550.0 1071 M1432.1 542L1558.0 1071 M1438.3 542L1566.0 1071 M1450.8 542L1580.3 1071 M1457.1 542L1586.7 1071 M1463.3 542L1593.0 1071 M1469.5 542L1599.3 1071 M1475.8 542L1605.7 1071" stroke="#404046" stroke-width="1.2" opacity="0.55"/><path d="M921.1 542L906.8 1071 M927.5 542L914.4 1071 M933.8 542L922.1 1071 M940.0 542L929.7 1071 M946.3 542L937.3 1071 M952.6 542L944.9 1071 M958.5 542L952.2 1071 M964.0 542L959.1 1071 M969.4 542L965.9 1071 M974.9 542L972.8 1071 M980.3 542L979.7 1071 M985.8 542L986.6 1071 M991.7 542L994.0 1071 M998.0 542L1001.9 1071 M1004.3 542L1009.8 1071 M1010.7 542L1017.7 1071 M1017.0 542L1025.6 1071 M1023.3 542L1033.5 1071 M1029.6 542L1041.5 1071 M1035.9 542L1049.6 1071 M1042.1 542L1057.7 1071 M1048.4 542L1065.8 1071 M1054.6 542L1073.9 1071 M1060.9 542L1082.0 1071 M1067.2 542L1090.1 1071 M1073.7 542L1098.2 1071 M1080.1 542L1106.4 1071 M1086.5 542L1114.6 1071 M1092.9 542L1122.8 1071 M1099.4 542L1130.9 1071 M1105.8 542L1139.1 1071 M1112.2 542L1147.2 1071 M1118.6 542L1155.3 1071 M1125.0 542L1163.4 1071 M1131.4 542L1171.6 1071 M1137.8 542L1179.7 1071 M1144.1 542L1187.9 1071 M1150.4 542L1196.3 1071 M1156.6 542L1204.7 1071 M1162.9 542L1213.1 1071 M1169.1 542L1221.4 1071 M1175.4 542L1229.8 1071 M1181.7 542L1238.0 1071 M1188.1 542L1246.1 1071 M1194.5 542L1254.2 1071 M1201.0 542L1262.3 1071 M1207.4 542L1270.4 1071 M1213.8 542L1278.5 1071 M1220.2 542L1286.7 1071 M1226.8 542L1295.0 1071 M1233.2 542L1303.3 1071 M1239.8 542L1311.7 1071 M1246.2 542L1320.0 1071 M1252.8 542L1328.3 1071 M1259.2 542L1336.7 1071 M1265.5 542L1345.0 1071 M1271.8 542L1353.3 1071 M1278.2 542L1361.7 1071 M1284.5 542L1370.0 1071 M1290.8 542L1378.3 1071 M1297.1 542L1386.5 1071 M1303.4 542L1394.4 1071 M1309.6 542L1402.3 1071 M1315.9 542L1410.2 1071 M1322.1 542L1418.1 1071 M1328.4 542L1426.0 1071 M1334.7 542L1434.0 1071 M1341.1 542L1442.0 1071 M1347.5 542L1450.0 1071 M1354.0 542L1458.0 1071 M1360.4 542L1466.0 1071 M1366.8 542L1474.0 1071 M1373.1 542L1482.0 1071 M1379.2 542L1490.0 1071 M1385.4 542L1498.0 1071 M1391.6 542L1506.0 1071 M1397.8 542L1514.0 1071 M1403.9 542L1522.0 1071 M1410.1 542L1530.0 1071 M1416.4 542L1538.0 1071 M1422.7 542L1546.0 1071 M1428.9 542L1554.0 1071 M1435.2 542L1562.0 1071 M1441.5 542L1570.0 1071 M1447.7 542L1577.2 1071 M1453.9 542L1583.5 1071 M1460.2 542L1589.8 1071 M1466.4 542L1596.2 1071 M1472.7 542L1602.5 1071 M1478.9 542L1608.8 1071" stroke="#a0a1a6" stroke-width="2" opacity="0.18"/><path d="M954.2 542L957.4 542L951.1 1071L946.4 1071Z M986.9 542L990.1 542L992.4 1071L987.6 1071Z M1024.9 542L1028.1 542L1039.9 1071L1035.1 1071Z M1062.4 542L1065.6 542L1088.4 1071L1083.6 1071Z M1101.0 542L1104.2 542L1137.4 1071L1132.6 1071Z M1139.4 542L1142.6 542L1186.2 1071L1181.3 1071Z M1176.9 542L1180.1 542L1236.4 1071L1231.6 1071Z M1215.4 542L1218.6 542L1284.9 1071L1280.1 1071Z M1254.4 542L1257.6 542L1334.9 1071L1330.1 1071Z M1292.4 542L1295.6 542L1384.9 1071L1380.1 1071Z M1329.9 542L1333.1 542L1432.4 1071L1427.6 1071Z M1368.4 542L1371.6 542L1480.4 1071L1475.6 1071Z M1405.4 542L1408.6 542L1528.4 1071L1523.6 1071Z M1443.0 542L1446.2 542L1576.4 1071L1571.6 1071Z" fill="#14171b"/><rect x="950.9" y="602" width="8" height="8" fill="#7a7a7a"/><circle cx="945.9" cy="606" r="1.3" fill="#c8c8c8"/><circle cx="963.9" cy="606" r="1.3" fill="#c8c8c8"/><rect x="984.7" y="602" width="8" height="8" fill="#7a7a7a"/><circle cx="979.7" cy="606" r="1.3" fill="#c8c8c8"/><circle cx="997.7" cy="606" r="1.3" fill="#c8c8c8"/><rect x="1023.8" y="602" width="8" height="8" fill="#7a7a7a"/><circle cx="1018.8" cy="606" r="1.3" fill="#c8c8c8"/><circle cx="1036.8" cy="606" r="1.3" fill="#c8c8c8"/><rect x="1062.7" y="602" width="8" height="8" fill="#7a7a7a"/><circle cx="1057.7" cy="606" r="1.3" fill="#c8c8c8"/><circle cx="1075.7" cy="606" r="1.3" fill="#c8c8c8"/><rect x="1102.5" y="602" width="8" height="8" fill="#7a7a7a"/><circle cx="1097.5" cy="606" r="1.3" fill="#c8c8c8"/><circle cx="1115.5" cy="606" r="1.3" fill="#c8c8c8"/><rect x="1142.2" y="602" width="8" height="8" fill="#7a7a7a"/><circle cx="1137.2" cy="606" r="1.3" fill="#c8c8c8"/><circle cx="1155.2" cy="606" r="1.3" fill="#c8c8c8"/><rect x="1181.2" y="602" width="8" height="8" fill="#7a7a7a"/><circle cx="1176.2" cy="606" r="1.3" fill="#c8c8c8"/><circle cx="1194.2" cy="606" r="1.3" fill="#c8c8c8"/><rect x="1220.9" y="602" width="8" height="8" fill="#7a7a7a"/><circle cx="1215.9" cy="606" r="1.3" fill="#c8c8c8"/><circle cx="1233.9" cy="606" r="1.3" fill="#c8c8c8"/><rect x="1261.3" y="602" width="8" height="8" fill="#7a7a7a"/><circle cx="1256.3" cy="606" r="1.3" fill="#c8c8c8"/><circle cx="1274.3" cy="606" r="1.3" fill="#c8c8c8"/><rect x="1300.7" y="602" width="8" height="8" fill="#7a7a7a"/><circle cx="1295.7" cy="606" r="1.3" fill="#c8c8c8"/><circle cx="1313.7" cy="606" r="1.3" fill="#c8c8c8"/><rect x="1339.4" y="602" width="8" height="8" fill="#7a7a7a"/><circle cx="1334.4" cy="606" r="1.3" fill="#c8c8c8"/><circle cx="1352.4" cy="606" r="1.3" fill="#c8c8c8"/><rect x="1379.1" y="602" width="8" height="8" fill="#7a7a7a"/><circle cx="1374.1" cy="606" r="1.3" fill="#c8c8c8"/><circle cx="1392.1" cy="606" r="1.3" fill="#c8c8c8"/><rect x="1417.4" y="602" width="8" height="8" fill="#7a7a7a"/><circle cx="1412.4" cy="606" r="1.3" fill="#c8c8c8"/><circle cx="1430.4" cy="606" r="1.3" fill="#c8c8c8"/><rect x="1456.3" y="602" width="8" height="8" fill="#7a7a7a"/><circle cx="1451.3" cy="606" r="1.3" fill="#c8c8c8"/><circle cx="1469.3" cy="606" r="1.3" fill="#c8c8c8"/><rect x="950.0" y="671" width="8" height="8" fill="#7a7a7a"/><circle cx="945.0" cy="675" r="1.3" fill="#c8c8c8"/><circle cx="963.0" cy="675" r="1.3" fill="#c8c8c8"/><rect x="984.9" y="671" width="8" height="8" fill="#7a7a7a"/><circle cx="979.9" cy="675" r="1.3" fill="#c8c8c8"/><circle cx="997.9" cy="675" r="1.3" fill="#c8c8c8"/><rect x="1025.3" y="671" width="8" height="8" fill="#7a7a7a"/><circle cx="1020.3" cy="675" r="1.3" fill="#c8c8c8"/><circle cx="1038.3" cy="675" r="1.3" fill="#c8c8c8"/><rect x="1065.5" y="671" width="8" height="8" fill="#7a7a7a"/><circle cx="1060.5" cy="675" r="1.3" fill="#c8c8c8"/><circle cx="1078.5" cy="675" r="1.3" fill="#c8c8c8"/><rect x="1106.7" y="671" width="8" height="8" fill="#7a7a7a"/><circle cx="1101.7" cy="675" r="1.3" fill="#c8c8c8"/><circle cx="1119.7" cy="675" r="1.3" fill="#c8c8c8"/><rect x="1147.7" y="671" width="8" height="8" fill="#7a7a7a"/><circle cx="1142.7" cy="675" r="1.3" fill="#c8c8c8"/><circle cx="1160.7" cy="675" r="1.3" fill="#c8c8c8"/><rect x="1188.5" y="671" width="8" height="8" fill="#7a7a7a"/><circle cx="1183.5" cy="675" r="1.3" fill="#c8c8c8"/><circle cx="1201.5" cy="675" r="1.3" fill="#c8c8c8"/><rect x="1229.5" y="671" width="8" height="8" fill="#7a7a7a"/><circle cx="1224.5" cy="675" r="1.3" fill="#c8c8c8"/><circle cx="1242.5" cy="675" r="1.3" fill="#c8c8c8"/><rect x="1271.2" y="671" width="8" height="8" fill="#7a7a7a"/><circle cx="1266.2" cy="675" r="1.3" fill="#c8c8c8"/><circle cx="1284.2" cy="675" r="1.3" fill="#c8c8c8"/><rect x="1312.3" y="671" width="8" height="8" fill="#7a7a7a"/><circle cx="1307.3" cy="675" r="1.3" fill="#c8c8c8"/><circle cx="1325.3" cy="675" r="1.3" fill="#c8c8c8"/><rect x="1352.3" y="671" width="8" height="8" fill="#7a7a7a"/><circle cx="1347.3" cy="675" r="1.3" fill="#c8c8c8"/><circle cx="1365.3" cy="675" r="1.3" fill="#c8c8c8"/><rect x="1393.2" y="671" width="8" height="8" fill="#7a7a7a"/><circle cx="1388.2" cy="675" r="1.3" fill="#c8c8c8"/><circle cx="1406.2" cy="675" r="1.3" fill="#c8c8c8"/><rect x="1432.9" y="671" width="8" height="8" fill="#7a7a7a"/><circle cx="1427.9" cy="675" r="1.3" fill="#c8c8c8"/><circle cx="1445.9" cy="675" r="1.3" fill="#c8c8c8"/><rect x="1473.1" y="671" width="8" height="8" fill="#7a7a7a"/><circle cx="1468.1" cy="675" r="1.3" fill="#c8c8c8"/><circle cx="1486.1" cy="675" r="1.3" fill="#c8c8c8"/><rect x="949.1" y="743" width="8" height="8" fill="#7a7a7a"/><circle cx="944.1" cy="747" r="1.3" fill="#c8c8c8"/><circle cx="962.1" cy="747" r="1.3" fill="#c8c8c8"/><rect x="985.1" y="743" width="8" height="8" fill="#7a7a7a"/><circle cx="980.1" cy="747" r="1.3" fill="#c8c8c8"/><circle cx="998.1" cy="747" r="1.3" fill="#c8c8c8"/><rect x="1026.8" y="743" width="8" height="8" fill="#7a7a7a"/><circle cx="1021.8" cy="747" r="1.3" fill="#c8c8c8"/><circle cx="1039.8" cy="747" r="1.3" fill="#c8c8c8"/><rect x="1068.5" y="743" width="8" height="8" fill="#7a7a7a"/><circle cx="1063.5" cy="747" r="1.3" fill="#c8c8c8"/><circle cx="1081.5" cy="747" r="1.3" fill="#c8c8c8"/><rect x="1111.2" y="743" width="8" height="8" fill="#7a7a7a"/><circle cx="1106.2" cy="747" r="1.3" fill="#c8c8c8"/><circle cx="1124.2" cy="747" r="1.3" fill="#c8c8c8"/><rect x="1153.6" y="743" width="8" height="8" fill="#7a7a7a"/><circle cx="1148.6" cy="747" r="1.3" fill="#c8c8c8"/><circle cx="1166.6" cy="747" r="1.3" fill="#c8c8c8"/><rect x="1196.0" y="743" width="8" height="8" fill="#7a7a7a"/><circle cx="1191.0" cy="747" r="1.3" fill="#c8c8c8"/><circle cx="1209.0" cy="747" r="1.3" fill="#c8c8c8"/><rect x="1238.4" y="743" width="8" height="8" fill="#7a7a7a"/><circle cx="1233.4" cy="747" r="1.3" fill="#c8c8c8"/><circle cx="1251.4" cy="747" r="1.3" fill="#c8c8c8"/><rect x="1281.6" y="743" width="8" height="8" fill="#7a7a7a"/><circle cx="1276.6" cy="747" r="1.3" fill="#c8c8c8"/><circle cx="1294.6" cy="747" r="1.3" fill="#c8c8c8"/><rect x="1324.3" y="743" width="8" height="8" fill="#7a7a7a"/><circle cx="1319.3" cy="747" r="1.3" fill="#c8c8c8"/><circle cx="1337.3" cy="747" r="1.3" fill="#c8c8c8"/><rect x="1365.7" y="743" width="8" height="8" fill="#7a7a7a"/><circle cx="1360.7" cy="747" r="1.3" fill="#c8c8c8"/><circle cx="1378.7" cy="747" r="1.3" fill="#c8c8c8"/><rect x="1407.9" y="743" width="8" height="8" fill="#7a7a7a"/><circle cx="1402.9" cy="747" r="1.3" fill="#c8c8c8"/><circle cx="1420.9" cy="747" r="1.3" fill="#c8c8c8"/><rect x="1449.1" y="743" width="8" height="8" fill="#7a7a7a"/><circle cx="1444.1" cy="747" r="1.3" fill="#c8c8c8"/><circle cx="1462.1" cy="747" r="1.3" fill="#c8c8c8"/><rect x="1490.7" y="743" width="8" height="8" fill="#7a7a7a"/><circle cx="1485.7" cy="747" r="1.3" fill="#c8c8c8"/><circle cx="1503.7" cy="747" r="1.3" fill="#c8c8c8"/><rect x="948.0" y="822" width="8" height="8" fill="#7a7a7a"/><circle cx="943.0" cy="826" r="1.3" fill="#c8c8c8"/><circle cx="961.0" cy="826" r="1.3" fill="#c8c8c8"/><rect x="985.3" y="822" width="8" height="8" fill="#7a7a7a"/><circle cx="980.3" cy="826" r="1.3" fill="#c8c8c8"/><circle cx="998.3" cy="826" r="1.3" fill="#c8c8c8"/><rect x="1028.4" y="822" width="8" height="8" fill="#7a7a7a"/><circle cx="1023.4" cy="826" r="1.3" fill="#c8c8c8"/><circle cx="1041.4" cy="826" r="1.3" fill="#c8c8c8"/><rect x="1071.8" y="822" width="8" height="8" fill="#7a7a7a"/><circle cx="1066.8" cy="826" r="1.3" fill="#c8c8c8"/><circle cx="1084.8" cy="826" r="1.3" fill="#c8c8c8"/><rect x="1116.0" y="822" width="8" height="8" fill="#7a7a7a"/><circle cx="1111.0" cy="826" r="1.3" fill="#c8c8c8"/><circle cx="1129.0" cy="826" r="1.3" fill="#c8c8c8"/><rect x="1160.0" y="822" width="8" height="8" fill="#7a7a7a"/><circle cx="1155.0" cy="826" r="1.3" fill="#c8c8c8"/><circle cx="1173.0" cy="826" r="1.3" fill="#c8c8c8"/><rect x="1204.3" y="822" width="8" height="8" fill="#7a7a7a"/><circle cx="1199.3" cy="826" r="1.3" fill="#c8c8c8"/><circle cx="1217.3" cy="826" r="1.3" fill="#c8c8c8"/><rect x="1248.2" y="822" width="8" height="8" fill="#7a7a7a"/><circle cx="1243.2" cy="826" r="1.3" fill="#c8c8c8"/><circle cx="1261.2" cy="826" r="1.3" fill="#c8c8c8"/><rect x="1293.1" y="822" width="8" height="8" fill="#7a7a7a"/><circle cx="1288.1" cy="826" r="1.3" fill="#c8c8c8"/><circle cx="1306.1" cy="826" r="1.3" fill="#c8c8c8"/><rect x="1337.5" y="822" width="8" height="8" fill="#7a7a7a"/><circle cx="1332.5" cy="826" r="1.3" fill="#c8c8c8"/><circle cx="1350.5" cy="826" r="1.3" fill="#c8c8c8"/><rect x="1380.4" y="822" width="8" height="8" fill="#7a7a7a"/><circle cx="1375.4" cy="826" r="1.3" fill="#c8c8c8"/><circle cx="1393.4" cy="826" r="1.3" fill="#c8c8c8"/><rect x="1424.0" y="822" width="8" height="8" fill="#7a7a7a"/><circle cx="1419.0" cy="826" r="1.3" fill="#c8c8c8"/><circle cx="1437.0" cy="826" r="1.3" fill="#c8c8c8"/><rect x="1466.9" y="822" width="8" height="8" fill="#7a7a7a"/><circle cx="1461.9" cy="826" r="1.3" fill="#c8c8c8"/><circle cx="1479.9" cy="826" r="1.3" fill="#c8c8c8"/><rect x="1510.1" y="822" width="8" height="8" fill="#7a7a7a"/><circle cx="1505.1" cy="826" r="1.3" fill="#c8c8c8"/><circle cx="1523.1" cy="826" r="1.3" fill="#c8c8c8"/><rect x="946.9" y="907" width="8" height="8" fill="#7a7a7a"/><circle cx="941.9" cy="911" r="1.3" fill="#c8c8c8"/><circle cx="959.9" cy="911" r="1.3" fill="#c8c8c8"/><rect x="985.5" y="907" width="8" height="8" fill="#7a7a7a"/><circle cx="980.5" cy="911" r="1.3" fill="#c8c8c8"/><circle cx="998.5" cy="911" r="1.3" fill="#c8c8c8"/><rect x="1030.2" y="907" width="8" height="8" fill="#7a7a7a"/><circle cx="1025.2" cy="911" r="1.3" fill="#c8c8c8"/><circle cx="1043.2" cy="911" r="1.3" fill="#c8c8c8"/><rect x="1075.3" y="907" width="8" height="8" fill="#7a7a7a"/><circle cx="1070.3" cy="911" r="1.3" fill="#c8c8c8"/><circle cx="1088.3" cy="911" r="1.3" fill="#c8c8c8"/><rect x="1121.2" y="907" width="8" height="8" fill="#7a7a7a"/><circle cx="1116.2" cy="911" r="1.3" fill="#c8c8c8"/><circle cx="1134.2" cy="911" r="1.3" fill="#c8c8c8"/><rect x="1166.8" y="907" width="8" height="8" fill="#7a7a7a"/><circle cx="1161.8" cy="911" r="1.3" fill="#c8c8c8"/><circle cx="1179.8" cy="911" r="1.3" fill="#c8c8c8"/><rect x="1213.2" y="907" width="8" height="8" fill="#7a7a7a"/><circle cx="1208.2" cy="911" r="1.3" fill="#c8c8c8"/><circle cx="1226.2" cy="911" r="1.3" fill="#c8c8c8"/><rect x="1258.7" y="907" width="8" height="8" fill="#7a7a7a"/><circle cx="1253.7" cy="911" r="1.3" fill="#c8c8c8"/><circle cx="1271.7" cy="911" r="1.3" fill="#c8c8c8"/><rect x="1305.4" y="907" width="8" height="8" fill="#7a7a7a"/><circle cx="1300.4" cy="911" r="1.3" fill="#c8c8c8"/><circle cx="1318.4" cy="911" r="1.3" fill="#c8c8c8"/><rect x="1351.7" y="907" width="8" height="8" fill="#7a7a7a"/><circle cx="1346.7" cy="911" r="1.3" fill="#c8c8c8"/><circle cx="1364.7" cy="911" r="1.3" fill="#c8c8c8"/><rect x="1396.2" y="907" width="8" height="8" fill="#7a7a7a"/><circle cx="1391.2" cy="911" r="1.3" fill="#c8c8c8"/><circle cx="1409.2" cy="911" r="1.3" fill="#c8c8c8"/><rect x="1441.3" y="907" width="8" height="8" fill="#7a7a7a"/><circle cx="1436.3" cy="911" r="1.3" fill="#c8c8c8"/><circle cx="1454.3" cy="911" r="1.3" fill="#c8c8c8"/><rect x="1486.0" y="907" width="8" height="8" fill="#7a7a7a"/><circle cx="1481.0" cy="911" r="1.3" fill="#c8c8c8"/><circle cx="1499.0" cy="911" r="1.3" fill="#c8c8c8"/><rect x="1530.9" y="907" width="8" height="8" fill="#7a7a7a"/><circle cx="1525.9" cy="911" r="1.3" fill="#c8c8c8"/><circle cx="1543.9" cy="911" r="1.3" fill="#c8c8c8"/><rect x="945.7" y="998" width="8" height="8" fill="#7a7a7a"/><circle cx="940.7" cy="1002" r="1.3" fill="#c8c8c8"/><circle cx="958.7" cy="1002" r="1.3" fill="#c8c8c8"/><rect x="985.8" y="998" width="8" height="8" fill="#7a7a7a"/><circle cx="980.8" cy="1002" r="1.3" fill="#c8c8c8"/><circle cx="998.8" cy="1002" r="1.3" fill="#c8c8c8"/><rect x="1032.1" y="998" width="8" height="8" fill="#7a7a7a"/><circle cx="1027.1" cy="1002" r="1.3" fill="#c8c8c8"/><circle cx="1045.1" cy="1002" r="1.3" fill="#c8c8c8"/><rect x="1079.1" y="998" width="8" height="8" fill="#7a7a7a"/><circle cx="1074.1" cy="1002" r="1.3" fill="#c8c8c8"/><circle cx="1092.1" cy="1002" r="1.3" fill="#c8c8c8"/><rect x="1126.8" y="998" width="8" height="8" fill="#7a7a7a"/><circle cx="1121.8" cy="1002" r="1.3" fill="#c8c8c8"/><circle cx="1139.8" cy="1002" r="1.3" fill="#c8c8c8"/><rect x="1174.2" y="998" width="8" height="8" fill="#7a7a7a"/><circle cx="1169.2" cy="1002" r="1.3" fill="#c8c8c8"/><circle cx="1187.2" cy="1002" r="1.3" fill="#c8c8c8"/><rect x="1222.8" y="998" width="8" height="8" fill="#7a7a7a"/><circle cx="1217.8" cy="1002" r="1.3" fill="#c8c8c8"/><circle cx="1235.8" cy="1002" r="1.3" fill="#c8c8c8"/><rect x="1270.0" y="998" width="8" height="8" fill="#7a7a7a"/><circle cx="1265.0" cy="1002" r="1.3" fill="#c8c8c8"/><circle cx="1283.0" cy="1002" r="1.3" fill="#c8c8c8"/><rect x="1318.5" y="998" width="8" height="8" fill="#7a7a7a"/><circle cx="1313.5" cy="1002" r="1.3" fill="#c8c8c8"/><circle cx="1331.5" cy="1002" r="1.3" fill="#c8c8c8"/><rect x="1367.0" y="998" width="8" height="8" fill="#7a7a7a"/><circle cx="1362.0" cy="1002" r="1.3" fill="#c8c8c8"/><circle cx="1380.0" cy="1002" r="1.3" fill="#c8c8c8"/><rect x="1413.2" y="998" width="8" height="8" fill="#7a7a7a"/><circle cx="1408.2" cy="1002" r="1.3" fill="#c8c8c8"/><circle cx="1426.2" cy="1002" r="1.3" fill="#c8c8c8"/><rect x="1459.9" y="998" width="8" height="8" fill="#7a7a7a"/><circle cx="1454.9" cy="1002" r="1.3" fill="#c8c8c8"/><circle cx="1472.9" cy="1002" r="1.3" fill="#c8c8c8"/><rect x="1506.5" y="998" width="8" height="8" fill="#7a7a7a"/><circle cx="1501.5" cy="1002" r="1.3" fill="#c8c8c8"/><circle cx="1519.5" cy="1002" r="1.3" fill="#c8c8c8"/><rect x="1553.1" y="998" width="8" height="8" fill="#7a7a7a"/><circle cx="1548.1" cy="1002" r="1.3" fill="#c8c8c8"/><circle cx="1566.1" cy="1002" r="1.3" fill="#c8c8c8"/><path d="M1192 704 L1236 672 L1283 650 L1290 657 L1244 686 L1206 722 Z" fill="#e6c8b4"/><path d="M1196 745 Q1215 715 1238 690 L1243 660 L1255 655 L1256 690 Q1232 728 1214 760 Z" fill="#efd6c4"/><ellipse cx="1261" cy="648" rx="12" ry="6.5" transform="rotate(-20 1261 648)" fill="#d42a4f"/><ellipse cx="1297" cy="641" rx="12" ry="6.5" transform="rotate(-25 1297 641)" fill="#d42a4f"/><ellipse cx="1244" cy="652" rx="4" ry="3" fill="#8a5a4a"/><path d="M1107 846 L1082 874 L1046 846 L1040 840 L1048 838 L1080 864 L1100 842 Z" fill="#e6c8b4"/><path d="M1068.7 773 L1091 739 L1116 714.5 L1125 692 L1145 685 L1188 698.7 L1201.5 725.7 L1215 755 L1233 795.5 L1246.5 822.5 L1215 833.7 L1170 836 L1125 845 L1107 851.7 L1089 855 L1086.7 838 L1093.5 822.5 L1086.7 791 Z" fill="#f6f3f4"/><defs><clipPath id="dc"><path d="M1068.7 773 L1091 739 L1116 714.5 L1125 692 L1145 685 L1188 698.7 L1201.5 725.7 L1215 755 L1233 795.5 L1246.5 822.5 L1215 833.7 L1170 836 L1125 845 L1107 851.7 L1089 855 L1086.7 838 L1093.5 822.5 L1086.7 791 Z"/></clipPath></defs><g clip-path="url(#dc)"><path d="M1125 692 L1145 685 L1188 698.7 L1201.5 725.7 L1215 755 L1233 795.5 L1246.5 822.5 L1215 833.7 L1170 836 L1125 845 L1107 851.7 L1089 855" fill="none" stroke="#ecc6d6" stroke-width="38" stroke-linejoin="round"/><path d="M1125 692 L1145 685 L1188 698.7 L1201.5 725.7 L1215 755 L1233 795.5 L1246.5 822.5 L1215 833.7 L1170 836 L1125 845 L1107 851.7 L1089 855" fill="none" stroke="#d65588" stroke-width="10" stroke-linejoin="round" opacity="0.85"/></g><path d="M1138 703 L1178 713 L1190 738 L1203 765 L1219 800 L1226 814 L1198 821 L1160 826 L1120 834 L1098 840" fill="none" stroke="#3d4583" stroke-width="4" stroke-linejoin="round" stroke-dasharray="4 3"/><path d="M1091 739 L1116 725 L1126 752 L1100 760 Z" fill="#d9a3c2" opacity="0.8"/><path d="M1103 738 Q1120 734 1138 743 Q1160 748 1168 762 Q1160 766 1148 760 Q1135 752 1110 750 Z" fill="#e6c8b4"/><path d="M1082 800 L1100 782 L1098 822 L1082 826 Z" fill="#e6c8b4"/><path d="M1012 794 Q1018 781 1034 784 Q1040 778 1050 784 Q1060 786 1064 797 L1061 838 Q1056 850 1042 852 Q1030 858 1018 852 Q1004 856 999 846 Q992 842 996 832 Q990 824 998 816 Q994 806 1004 802 Q1004 794 1012 794 Z" fill="#2b211f"/><path d="M1000 830 q-6 4 -3 10 M1006 800 q-8 -2 -8 6 M1036 784 q2 -6 8 -4" fill="none" stroke="#2b211f" stroke-width="4" stroke-linecap="round"/><ellipse cx="1070" cy="815" rx="12" ry="16" transform="rotate(-15 1070 815)" fill="#e6c8b4"/><circle cx="1062" cy="810" r="4" fill="#1b1d2a"/><circle cx="1065" cy="826" r="4" fill="#1b1d2a"/><ellipse cx="1076" cy="816" rx="1.8" ry="3" fill="#b33a48"/></g><rect x="903" y="108" width="1" height="1035" fill="#56e0e6"/><rect x="994" y="108" width="1" height="1035" fill="#56e0e6"/><rect x="1311" y="108" width="1" height="1035" fill="#56e0e6"/><rect x="1406" y="108" width="1" height="1035" fill="#56e0e6"/><rect x="58" y="527" width="1502" height="1" fill="#56e0e6"/><rect x="58" y="629" width="1502" height="1" fill="#56e0e6"/><rect x="58" y="884" width="1502" height="1" fill="#56e0e6"/><rect x="58" y="981" width="1502" height="1" fill="#56e0e6"/></svg>
<div class="a" style="left:1578px;top:63px;width:340px;height:12px;background:#d9d9d9;"></div>
<svg style="left:1602px;top:66px" width="10" height="8"><path d="M3.5 0.5 L0.5 3.5 L3.5 6.5Z M8 0.5 L5 3.5 L8 6.5Z" fill="#333"/></svg>
<svg style="left:1905px;top:66px" width="10" height="8"><path d="M0.5 0.5 L3.5 3.5 L0.5 6.5Z M5 0.5 L8 3.5 L5 6.5Z" fill="#333"/></svg>
<div class="a" style="left:1576px;top:63px;width:2px;height:1097px;background:#d0d0d0;"></div>
<div class="a" style="left:1918px;top:63px;width:2px;height:1097px;background:#d6d6d6;"></div>
<div class="a" style="left:1578px;top:115px;width:38px;height:1px;background:#d2d2d2;"></div>
<div class="a" style="left:1578px;top:156px;width:38px;height:1px;background:#d2d2d2;"></div>
<div class="a" style="left:1578px;top:197px;width:38px;height:1px;background:#d2d2d2;"></div>
<div class="a" style="left:1578px;top:238px;width:38px;height:1px;background:#d2d2d2;"></div>
<div class="a" style="left:1578px;top:307px;width:38px;height:1px;background:#d2d2d2;"></div>
<div class="a" style="left:1578px;top:376px;width:38px;height:1px;background:#d2d2d2;"></div>
<svg style="left:0;top:0" width="1920" height="400"><path d="M1588.5 78V82 M1590.5 78V82 M1592.5 78V82 M1594.5 78V82 M1596.5 78V82 M1598.5 78V82 M1600.5 78V82 M1602.5 78V82 M1604.5 78V82 M1606.5 78V82 M1588.5 119V123 M1590.5 119V123 M1592.5 119V123 M1594.5 119V123 M1596.5 119V123 M1598.5 119V123 M1600.5 119V123 M1602.5 119V123 M1604.5 119V123 M1606.5 119V123 M1588.5 160V164 M1590.5 160V164 M1592.5 160V164 M1594.5 160V164 M1596.5 160V164 M1598.5 160V164 M1600.5 160V164 M1602.5 160V164 M1604.5 160V164 M1606.5 160V164 M1588.5 201V205 M1590.5 201V205 M1592.5 201V205 M1594.5 201V205 M1596.5 201V205 M1598.5 201V205 M1600.5 201V205 M1602.5 201V205 M1604.5 201V205 M1606.5 201V205 M1588.5 242V246 M1590.5 242V246 M1592.5 242V246 M1594.5 242V246 M1596.5 242V246 M1598.5 242V246 M1600.5 242V246 M1602.5 242V246 M1604.5 242V246 M1606.5 242V246 M1588.5 311V315 M1590.5 311V315 M1592.5 311V315 M1594.5 311V315 M1596.5 311V315 M1598.5 311V315 M1600.5 311V315 M1602.5 311V315 M1604.5 311V315 M1606.5 311V315" stroke="#a8a8a8" stroke-width="1"/><path d="M1593 92.5 L1606 99 L1593 105.5Z" fill="#222"/><path d="M1589 132 H1601.5 M1596 132 L1592.8 146.5" fill="none" stroke="#111" stroke-width="2.2"/><path d="M1600 136.5 L1598 147 M1608.5 136.5 L1600.3 142 L1607.5 147" fill="none" stroke="#111" stroke-width="1.8"/><path d="M1589 171 H1600.5 M1595 171 L1592 182.5" fill="none" stroke="#111" stroke-width="2"/><path d="M1598.5 174.5 L1596.8 183 M1606 174.5 L1598.5 179 L1605.5 183" fill="none" stroke="#111" stroke-width="1.6"/><ellipse cx="1593" cy="187.3" rx="4.3" ry="2.4" fill="#bfe3fb" stroke="#1b7bd3" stroke-width="2"/><ellipse cx="1602.5" cy="187.3" rx="4.3" ry="2.4" fill="#bfe3fb" stroke="#1b7bd3" stroke-width="2"/><circle cx="1598" cy="221.5" r="6.5" fill="none" stroke="#222" stroke-width="1.6"/><path d="M1602.6 216.9 A6.5 6.5 0 0 1 1593.4 226.1Z" fill="#222"/><path d="M1595 256 l-4 2 v5 l4 2.2 l4 -2.2 v-5z" fill="#999" stroke="#222" stroke-width="1"/><rect x="1601" y="255" width="4.5" height="4.5" fill="#222"/><rect x="1601" y="261" width="4.5" height="4.5" fill="#222"/><rect x="1591" y="267.5" width="15" height="3" fill="#222"/><circle cx="1598.5" cy="290" r="7.5" fill="none" stroke="#222" stroke-width="1.3"/><rect x="1597.7" y="288" width="1.8" height="6" fill="#222"/><circle cx="1598.6" cy="285.6" r="1.1" fill="#222"/><text x="1591" y="339" font-family="Liberation Sans" font-size="17" fill="#222">A</text><rect x="1605" y="323" width="1" height="18" fill="#222"/><text x="1591" y="367" font-family="Liberation Sans" font-weight="bold" font-size="16" fill="#222">¶</text></svg>
<div class="a" style="left:1618px;top:74px;width:300px;height:28px;background:#d9d9d9;"></div>
<div class="a" style="left:1618px;top:74px;width:83px;height:28px;background:#f0f0f0;"></div>
<div class="t" style="left:1628px;top:85px;font-size:10px;font-weight:bold;color:#3c3c3c">Histogramme</div>
<div class="a" style="left:1769px;top:74px;width:1px;height:28px;background:#cbcbcb;"></div>
<div class="t" style="left:1710px;top:85px;font-size:10px;font-weight:bold;color:#6c6c6c">Navigation</div>
<svg style="left:1901px;top:84px" width="12" height="9"><path d="M0 0.5H11M0 2.5H11M0 4.5H11M0 6.5H11" stroke="#666" stroke-width="1"/></svg>
<div class="a" style="left:1618px;top:102px;width:300px;height:160px;background:#f0f0f0;"></div>
<div class="t" style="left:1626px;top:117px;font-size:10px;color:#555">Couche :</div>
<div class="a" style="left:1671px;top:112px;width:110px;height:19px;background:#fcfcfc;border:1px solid #cfcfcf;border-radius:3px"></div>
<div class="t" style="left:1680px;top:117px;font-size:10px;color:#333">RVB</div>
<svg style="left:1769px;top:119px" width="9" height="6"><path d="M0.5 0.5 L4.5 4.5 L8.5 0.5" fill="none" stroke="#555" stroke-width="1"/></svg>
<svg style="left:1880px;top:113px" width="16" height="16"><path d="M3 7 A5 5 0 0 1 12.5 5" fill="none" stroke="#333" stroke-width="1.8"/><path d="M13 1.5 V6 H8.5Z" fill="#333"/><path d="M13 9 A5 5 0 0 1 3.5 11" fill="none" stroke="#333" stroke-width="1.8"/><path d="M3 14.5 V10 H7.5Z" fill="#333"/></svg>
<div class="a" style="left:1624px;top:134px;width:259px;height:104px;background:#f8f8f8;border:1px solid #d8d8d8"></div>
<svg style="left:0;top:0" width="1920" height="300"><polygon points="1625,236 1625.0,235.6 1636.0,235.0 1646.0,233.0 1648.0,230.0 1652.0,227.0 1658.0,225.0 1660.0,219.0 1662.0,212.0 1663.0,198.0 1664.0,180.0 1664.4,162.0 1665.6,180.0 1667.6,159.0 1669.0,180.0 1670.4,198.0 1672.0,182.0 1673.6,192.0 1675.6,182.0 1678.0,160.0 1679.6,148.0 1681.0,138.0 1682.4,139.0 1683.6,180.0 1685.6,202.0 1687.6,226.0 1689.6,224.0 1692.0,218.0 1693.6,198.0 1695.0,168.0 1698.0,148.0 1699.6,180.0 1702.0,176.0 1704.0,188.0 1708.0,156.0 1709.6,139.0 1711.2,138.0 1713.0,172.0 1715.0,204.0 1717.0,224.0 1720.0,220.0 1723.0,218.0 1726.0,212.0 1730.0,200.0 1732.0,164.0 1733.0,139.0 1735.0,138.0 1736.4,162.0 1738.0,140.0 1741.0,168.0 1743.0,138.0 1747.0,138.0 1749.0,192.0 1751.6,212.0 1756.0,212.0 1760.0,213.0 1768.0,216.0 1776.0,220.0 1782.0,224.0 1790.0,228.0 1800.0,233.0 1810.0,234.0 1836.0,234.0 1846.0,233.0 1856.0,234.4 1870.0,235.6 1870,236" fill="#222"/><path d="M1868 140 L1874 151 H1862Z" fill="#222"/><rect x="1867.4" y="143.5" width="1.2" height="4" fill="#fff"/><rect x="1867.4" y="148.6" width="1.2" height="1.2" fill="#fff"/></svg>
<div class="t" style="left:1628px;top:246px;font-size:10px;color:#555">Source :</div>
<div class="a" style="left:1671px;top:241px;width:233px;height:19px;background:#fcfcfc;border:1px solid #cfcfcf;border-radius:3px"></div>
<div class="t" style="left:1680px;top:246px;font-size:10px;color:#333">Image entière</div>
<svg style="left:1892px;top:248px" width="9" height="6"><path d="M0.5 0.5 L4.5 4.5 L8.5 0.5" fill="none" stroke="#555" stroke-width="1"/></svg>
<div class="a" style="left:1618px;top:262px;width:300px;height:3px;background:#d2d2d2;"></div>
<div class="a" style="left:1618px;top:265px;width:300px;height:28px;background:#d9d9d9;"></div>
<div class="a" style="left:1618px;top:265px;width:55px;height:28px;background:#f0f0f0;"></div>
<div class="t" style="left:1628px;top:276px;font-size:10px;font-weight:bold;color:#3c3c3c">Calques</div>
<div class="a" style="left:1720px;top:265px;width:1px;height:28px;background:#cbcbcb;"></div>
<div class="t" style="left:1682px;top:276px;font-size:10px;font-weight:bold;color:#6c6c6c">Tracés</div>
<svg style="left:1901px;top:275px" width="12" height="9"><path d="M0 0.5H11M0 2.5H11M0 4.5H11M0 6.5H11" stroke="#666" stroke-width="1"/></svg>
<div class="a" style="left:1618px;top:293px;width:300px;height:420px;background:#f0f0f0;"></div>
<div class="a" style="left:1623px;top:302px;width:108px;height:18px;background:#fcfcfc;border:1px solid #cfcfcf;border-radius:3px"></div>
<svg style="left:1630px;top:304px" width="12" height="12"><circle cx="7" cy="4.5" r="3.4" fill="none" stroke="#333" stroke-width="1.5"/><path d="M4.6 7 L1.2 10.4" stroke="#333" stroke-width="2"/></svg>
<div class="t" style="left:1645px;top:306px;font-size:10px;color:#333">Type</div>
<svg style="left:1719px;top:308px" width="9" height="6"><path d="M0.5 0.5 L4.5 4.5 L8.5 0.5" fill="none" stroke="#555" stroke-width="1"/></svg>
<svg style="left:0;top:0" width="1920" height="400"><rect x="1752.5" y="305.5" width="11" height="9" fill="none" stroke="#222" stroke-width="1.3"/><path d="M1754.5 313 L1756.8 309.5 L1758.3 311 L1759.8 309 L1762 313Z" fill="#222"/><circle cx="1782.5" cy="310" r="5" fill="none" stroke="#222" stroke-width="1.3"/><path d="M1786 306.5 A5 5 0 0 1 1779 313.5Z" fill="#222"/><path d="M1802 305 H1812 V308 H1811 Q1810.5 306.5 1809 306.5 H1808 V314 H1809.5 V315.5 H1804.5 V314 H1806 V306.5 H1805 Q1803.5 306.5 1803 308 H1802Z" fill="#222"/><rect x="1826" y="305.5" width="9" height="9" fill="none" stroke="#222" stroke-width="1.2"/><rect x="1824.8" y="304.3" width="2.4" height="2.4" fill="#222"/><rect x="1833.8" y="304.3" width="2.4" height="2.4" fill="#222"/><rect x="1824.8" y="313.3" width="2.4" height="2.4" fill="#222"/><rect x="1833.8" y="313.3" width="2.4" height="2.4" fill="#222"/><path d="M1852.5 305.5 H1857 L1859.5 308 V314.5 H1852.5Z" fill="none" stroke="#222" stroke-width="1.2"/><rect x="1850.5" y="310.5" width="5" height="5" fill="#f0f0f0" stroke="#222" stroke-width="1.2"/><rect x="1884" y="302" width="8" height="17" rx="4" fill="#f8f8f8" stroke="#e0e0e0" stroke-width="0.8"/><circle cx="1888" cy="306" r="4" fill="#333"/></svg>
<div class="a" style="left:1618px;top:324px;width:300px;height:1px;background:#dadada;"></div>
<div class="a" style="left:1623px;top:329px;width:164px;height:18px;background:#fcfcfc;border:1px solid #cfcfcf;border-radius:3px"></div>
<div class="t" style="left:1631px;top:334px;font-size:10px;color:#333">Luminosité</div>
<svg style="left:1775px;top:336px" width="9" height="6"><path d="M0.5 0.5 L4.5 4.5 L8.5 0.5" fill="none" stroke="#555" stroke-width="1"/></svg>
<div class="t" style="left:1794px;top:333px;font-size:10px;color:#555">Opacité :</div>
<div class="a" style="left:1837px;top:328px;width:56px;height:19px;background:#fcfeff;border:1px solid #3b79b8;border-radius:3px"></div>
<div class="a" style="left:1876px;top:329px;width:1px;height:17px;background:#3b79b8;"></div>
<div class="t" style="left:1842px;top:333px;font-size:10px;color:#222">50 %</div>
<svg style="left:1880px;top:335px" width="9" height="6"><path d="M0.5 0.5 L4.5 4.5 L8.5 0.5" fill="none" stroke="#444" stroke-width="1"/></svg>
<div class="a" style="left:1618px;top:351px;width:300px;height:1px;background:#dadada;"></div>
<div class="t" style="left:1625px;top:360px;font-size:10px;color:#555">Verrou :</div>
<svg style="left:0;top:0" width="1920" height="400"><rect x="1671.5" y="359.5" width="10.5" height="10.5" fill="#eee" stroke="#aaa" stroke-width="1"/><rect x="1672" y="360" width="2.6" height="2.6" fill="#c8c8c8"/><rect x="1677.2" y="360" width="2.6" height="2.6" fill="#c8c8c8"/><rect x="1674.6" y="362.6" width="2.6" height="2.6" fill="#c8c8c8"/><rect x="1679.8" y="362.6" width="2.2" height="2.6" fill="#c8c8c8"/><rect x="1672" y="365.2" width="2.6" height="2.6" fill="#c8c8c8"/><rect x="1677.2" y="365.2" width="2.6" height="2.6" fill="#c8c8c8"/><path d="M1705 359 L1698 366.5 q-4 0 -5 5 q4.5 -0.5 5.5 -3.5 L1706 360Z" fill="#8a8a8a"/><path d="M1720.5 358 L1723 361 H1721.3 V363.7 H1724 V362 L1727 364.5 L1724 367 V365.3 H1721.3 V368 H1723 L1720.5 371 L1718 368 H1719.7 V365.3 H1717 V367 L1714 364.5 L1717 362 V363.7 H1719.7 V361 H1718Z" fill="#222"/><path d="M1738.5 360 V369 H1748 V364 L1744 360Z" fill="none" stroke="#222" stroke-width="1.2"/><path d="M1736.5 360.5 h2 M1736.5 369.5 h2 M1748 358.5 v2 M1748 369 v2" stroke="#222" stroke-width="1"/><path d="M1762 364 V362 a3 3 0 0 1 6 0 V364" fill="none" stroke="#222" stroke-width="1.6"/><rect x="1760.5" y="364" width="9" height="7" rx="0.8" fill="#222"/><rect x="1764.3" y="366.5" width="1.4" height="1.6" fill="#fff"/></svg>
<div class="t" style="left:1805px;top:360px;font-size:10px;color:#555">Fond :</div>
<div class="a" style="left:1837px;top:356px;width:56px;height:18px;background:#fcfcfc;border:1px solid #d6d6d6;border-radius:3px"></div>
<div class="a" style="left:1876px;top:357px;width:1px;height:16px;background:#d6d6d6;"></div>
<div class="t" style="left:1842px;top:360px;font-size:10px;color:#222">100 %</div>
<svg style="left:1880px;top:362px" width="9" height="6"><path d="M0.5 0.5 L4.5 4.5 L8.5 0.5" fill="none" stroke="#444" stroke-width="1"/></svg>
<div class="a" style="left:1618px;top:379px;width:300px;height:1px;background:#dadada;"></div>
<div class="a" style="left:1618px;top:380px;width:286px;height:183px;background:#f0f0f0;"></div>
<div class="a" style="left:1904px;top:380px;width:14px;height:306px;background:#e6e6e6;"></div>
<div class="a" style="left:1618px;top:563px;width:286px;height:123px;background:#e6e6e6;"></div>
<div class="a" style="left:1650px;top:380px;width:254px;height:45px;background:#b5b5b5;"></div>
<div class="a" style="left:1618px;top:424px;width:286px;height:1px;background:#dcdcdc;"></div>
<div class="a" style="left:1618px;top:470px;width:286px;height:1px;background:#dcdcdc;"></div>
<div class="a" style="left:1618px;top:516px;width:286px;height:1px;background:#dcdcdc;"></div>
<div class="a" style="left:1618px;top:562px;width:286px;height:1px;background:#dcdcdc;"></div>
<div class="a" style="left:1649px;top:380px;width:1px;height:183px;background:#dedede;"></div>
<svg style="left:1627px;top:397px" width="14" height="10"><path d="M0.5 5 Q7 -2 13.5 5 Q7 12 0.5 5Z" fill="#2b2b2b"/><circle cx="7" cy="5" r="2.6" fill="#f0f0f0"/><circle cx="7" cy="5" r="1.6" fill="#2b2b2b"/><circle cx="6.3" cy="4.3" r="0.6" fill="#f0f0f0"/></svg>
<svg style="left:1673px;top:395px" width="17" height="14"><rect x="0.5" y="0.5" width="16" height="13" fill="#b8b8b8" stroke="#222" stroke-width="1"/><path d="M1 1 L8.5 7 L16 1Z" fill="#333"/><path d="M1 13 L8.5 7 L16 13Z" fill="#8a8a8a"/><path d="M1 1 L8.5 7 L1 13Z" fill="#c4c4c4"/><path d="M16 1 L8.5 7 L16 13Z" fill="#d4d4d4"/></svg>
<svg style="left:1712px;top:394px" width="9" height="15"><rect x="1" y="1" width="7" height="6.5" rx="3.2" fill="none" stroke="#444" stroke-width="1.1"/><rect x="1" y="7.5" width="7" height="6.5" rx="3.2" fill="none" stroke="#444" stroke-width="1.1"/><rect x="3.7" y="4" width="1.6" height="7" fill="#222"/></svg>
<div class="a" style="left:1724px;top:383px;width:56px;height:39px;background:#fff;border:1px solid #222"></div>
<svg style="left:1721px;top:380px" width="62" height="45"><path d="M1 18 V1 H20 M42 1 H61 V18 M1 27 V44 H20 M42 44 H61 V27" fill="none" stroke="#111" stroke-width="1.6"/></svg>
<div class="t" style="left:1790px;top:398px;font-size:10px;color:#222;">Correction sélective ...</div>
<svg style="left:1627px;top:444px" width="14" height="10"><path d="M0.5 5 Q7 -2 13.5 5 Q7 12 0.5 5Z" fill="#2b2b2b"/><circle cx="7" cy="5" r="2.6" fill="#f0f0f0"/><circle cx="7" cy="5" r="1.6" fill="#2b2b2b"/><circle cx="6.3" cy="4.3" r="0.6" fill="#f0f0f0"/></svg>
<svg style="left:1673px;top:441px" width="17" height="14"><rect x="0.5" y="0.5" width="16" height="13" fill="#b8b8b8" stroke="#222" stroke-width="1"/><path d="M1 1 L8.5 7 L16 1Z" fill="#333"/><path d="M1 13 L8.5 7 L16 13Z" fill="#8a8a8a"/><path d="M1 1 L8.5 7 L1 13Z" fill="#c4c4c4"/><path d="M16 1 L8.5 7 L16 13Z" fill="#d4d4d4"/></svg>
<svg style="left:1712px;top:441px" width="9" height="15"><rect x="1" y="1" width="7" height="6.5" rx="3.2" fill="none" stroke="#444" stroke-width="1.1"/><rect x="1" y="7.5" width="7" height="6.5" rx="3.2" fill="none" stroke="#444" stroke-width="1.1"/><rect x="3.7" y="4" width="1.6" height="7" fill="#222"/></svg>
<div class="a" style="left:1724px;top:429px;width:56px;height:39px;background:#fff;border:1px solid #222"></div>
<div class="t" style="left:1790px;top:444px;font-size:10px;color:#222;">Correction sélective 1</div>
<svg style="left:1627px;top:490px" width="14" height="10"><path d="M0.5 5 Q7 -2 13.5 5 Q7 12 0.5 5Z" fill="#2b2b2b"/><circle cx="7" cy="5" r="2.6" fill="#f0f0f0"/><circle cx="7" cy="5" r="1.6" fill="#2b2b2b"/><circle cx="6.3" cy="4.3" r="0.6" fill="#f0f0f0"/></svg>
<div class="a" style="left:1653px;top:475px;width:56px;height:39px;background:linear-gradient(180deg,#253e63,#2a4468);border:1px solid #1e2a3a"></div>
<svg style="left:1712px;top:487px" width="9" height="15"><rect x="1" y="1" width="7" height="6.5" rx="3.2" fill="none" stroke="#444" stroke-width="1.1"/><rect x="1" y="7.5" width="7" height="6.5" rx="3.2" fill="none" stroke="#444" stroke-width="1.1"/><rect x="3.7" y="4" width="1.6" height="7" fill="#222"/></svg>
<div class="a" style="left:1724px;top:475px;width:56px;height:39px;background:#fff;border:1px solid #222"></div>
<svg style="left:1724px;top:475px" width="56" height="39"><path d="M32 14 H55 V38 H30 Q31 20 32 14Z" fill="#000"/></svg>
<div class="t" style="left:1790px;top:490px;font-size:10px;color:#222;">Calque 1</div>
<svg style="left:1627px;top:536px" width="14" height="10"><path d="M0.5 5 Q7 -2 13.5 5 Q7 12 0.5 5Z" fill="#2b2b2b"/><circle cx="7" cy="5" r="2.6" fill="#f0f0f0"/><circle cx="7" cy="5" r="1.6" fill="#2b2b2b"/><circle cx="6.3" cy="4.3" r="0.6" fill="#f0f0f0"/></svg>
<svg style="left:1653px;top:521px" width="56" height="39"><defs><linearGradient id="c0" x1="0" y1="0" x2="0.3" y2="1"><stop offset="0" stop-color="#6e8c6f"/><stop offset="1" stop-color="#3c666f"/></linearGradient></defs><rect x="0" y="0" width="56" height="39" fill="url(#c0)"/><path d="M33 15 H55 V38 H31Z" fill="#9a9a9c"/><path d="M38 30 l5 -4 l3 2 l-5 4z" fill="#eee"/><circle cx="37" cy="27" r="1.5" fill="#222"/><rect x="0.5" y="0.5" width="55" height="38" fill="none" stroke="#333" stroke-width="1"/></svg>
<div class="t" style="left:1719px;top:536px;font-size:10px;color:#222;">Calque 0</div>
<div class="a" style="left:1722px;top:565px;width:55px;height:16px;background:#ffffe1;border:1px solid #000"></div>
<div class="t" style="left:1727px;top:568px;font-size:10px;color:#000;">Calque 0</div>
<div class="a" style="left:1618px;top:686px;width:300px;height:26px;background:#f0f0f0;"></div>
<div class="a" style="left:1618px;top:686px;width:300px;height:1px;background:#dadada;"></div>
<svg style="left:0;top:0" width="1920" height="760"><path d="M1719.5 696.5 h-2 a2.8 2.8 0 0 0 0 5.6 h2 M1724.5 696.5 h2 a2.8 2.8 0 0 1 0 5.6 h-2 M1719 699.3 h6" fill="none" stroke="#aaa" stroke-width="1.3"/><text x="1745" y="704" font-family="Liberation Serif" font-style="italic" font-size="14" fill="#222">fx</text><path d="M1758 707 h3 l-1.5 2z" fill="#222"/><rect x="1770" y="693.5" width="13" height="10" fill="#222"/><circle cx="1776.5" cy="698.5" r="3" fill="#f0f0f0"/><circle cx="1804" cy="699" r="5" fill="none" stroke="#222" stroke-width="1.3"/><path d="M1807.5 695.5 A5 5 0 0 1 1800.5 702.5Z" fill="#222"/><path d="M1812 707 h3 l-1.5 2z" fill="#222"/><path d="M1825.5 694.5 h4 l1.5 1.5 h6 v8 h-11.5z" fill="#c8c8c8" stroke="#333" stroke-width="1"/><path d="M1853.5 694.5 h9 v9 h-5 l-4 -4z" fill="#c8c8c8" stroke="#333" stroke-width="1"/><path d="M1879.5 695.5 h10 M1883 693.5 h3 v2 M1880.5 695.5 v9 h8 v-9 M1882.8 697 v6 M1884.5 697 v6 M1886.2 697 v6" fill="none" stroke="#222" stroke-width="1"/></svg>
<div class="a" style="left:1618px;top:712px;width:300px;height:3px;background:#d2d2d2;"></div>
<div class="a" style="left:1618px;top:714px;width:300px;height:28px;background:#d9d9d9;"></div>
<div class="a" style="left:1618px;top:714px;width:58px;height:28px;background:#f0f0f0;"></div>
<div class="t" style="left:1628px;top:725px;font-size:10px;font-weight:bold;color:#3c3c3c">Couches</div>
<svg style="left:1901px;top:724px" width="12" height="9"><path d="M0 0.5H11M0 2.5H11M0 4.5H11M0 6.5H11" stroke="#666" stroke-width="1"/></svg>
<div class="a" style="left:1618px;top:742px;width:300px;height:392px;background:#e6e6e6;"></div>
<div class="a" style="left:1619px;top:742px;width:284px;height:224px;background:#f0f0f0;"></div>
<div class="a" style="left:1903px;top:742px;width:15px;height:392px;background:#e6e6e6;"></div>
<div class="a" style="left:1619px;top:923px;width:284px;height:43px;background:#b5b5b5;"></div>
<div class="a" style="left:1619px;top:790px;width:284px;height:1px;background:#dcdcdc;"></div>
<div class="a" style="left:1619px;top:834px;width:284px;height:1px;background:#dcdcdc;"></div>
<div class="a" style="left:1619px;top:878px;width:284px;height:1px;background:#dcdcdc;"></div>
<div class="a" style="left:1619px;top:922px;width:284px;height:1px;background:#dcdcdc;"></div>
<svg style="left:1623px;top:762px" width="14" height="10"><path d="M0.5 5 Q7 -2 13.5 5 Q7 12 0.5 5Z" fill="#2b2b2b"/><circle cx="7" cy="5" r="2.6" fill="#f0f0f0"/><circle cx="7" cy="5" r="1.6" fill="#2b2b2b"/><circle cx="6.3" cy="4.3" r="0.6" fill="#f0f0f0"/></svg>
<svg style="left:1644px;top:749px" width="56" height="39"><defs><linearGradient id="g749" x1="0" y1="0" x2="0.4" y2="1"><stop offset="0" stop-color="#2f5589"/><stop offset="1" stop-color="#264677"/></linearGradient><pattern id="p749" width="4" height="4" patternUnits="userSpaceOnUse"><rect width="4" height="4" fill="#a0a0a2"/><circle cx="2" cy="2" r="0.7" fill="#555"/></pattern></defs><rect width="56" height="39" fill="url(#g749)"/><path d="M31 15 L55 14 V38 H29Z" fill="url(#p749)"/><path d="M36 30 l5 -5 l3 2 l-5 5z" fill="#eee"/><circle cx="35" cy="28" r="1.4" fill="#222"/><rect x="0.5" y="0.5" width="55" height="38" fill="none" stroke="#222" stroke-width="1"/></svg>
<div class="t" style="left:1706px;top:762px;font-size:10px;color:#222;">RVB</div>
<div class="t" style="left:1859px;top:762px;font-size:10px;color:#222;">Ctrl+2</div>
<svg style="left:1623px;top:806px" width="14" height="10"><path d="M0.5 5 Q7 -2 13.5 5 Q7 12 0.5 5Z" fill="#2b2b2b"/><circle cx="7" cy="5" r="2.6" fill="#f0f0f0"/><circle cx="7" cy="5" r="1.6" fill="#2b2b2b"/><circle cx="6.3" cy="4.3" r="0.6" fill="#f0f0f0"/></svg>
<svg style="left:1644px;top:793px" width="56" height="39"><defs><linearGradient id="g793" x1="0" y1="0" x2="0.4" y2="1"><stop offset="0" stop-color="#4a4a4a"/><stop offset="1" stop-color="#333"/></linearGradient><pattern id="p793" width="4" height="4" patternUnits="userSpaceOnUse"><rect width="4" height="4" fill="#9c9c9c"/><circle cx="2" cy="2" r="0.7" fill="#555"/></pattern></defs><rect width="56" height="39" fill="url(#g793)"/><path d="M31 15 L55 14 V38 H29Z" fill="url(#p793)"/><path d="M36 30 l5 -5 l3 2 l-5 5z" fill="#eee"/><circle cx="35" cy="28" r="1.4" fill="#222"/><rect x="0.5" y="0.5" width="55" height="38" fill="none" stroke="#222" stroke-width="1"/></svg>
<div class="t" style="left:1706px;top:806px;font-size:10px;color:#222;">Rouge</div>
<div class="t" style="left:1859px;top:806px;font-size:10px;color:#222;">Ctrl+3</div>
<svg style="left:1623px;top:850px" width="14" height="10"><path d="M0.5 5 Q7 -2 13.5 5 Q7 12 0.5 5Z" fill="#2b2b2b"/><circle cx="7" cy="5" r="2.6" fill="#f0f0f0"/><circle cx="7" cy="5" r="1.6" fill="#2b2b2b"/><circle cx="6.3" cy="4.3" r="0.6" fill="#f0f0f0"/></svg>
<svg style="left:1644px;top:837px" width="56" height="39"><defs><linearGradient id="g837" x1="0" y1="0" x2="0.4" y2="1"><stop offset="0" stop-color="#6e6e6e"/><stop offset="1" stop-color="#555"/></linearGradient><pattern id="p837" width="4" height="4" patternUnits="userSpaceOnUse"><rect width="4" height="4" fill="#a3a3a3"/><circle cx="2" cy="2" r="0.7" fill="#555"/></pattern></defs><rect width="56" height="39" fill="url(#g837)"/><path d="M31 15 L55 14 V38 H29Z" fill="url(#p837)"/><path d="M36 30 l5 -5 l3 2 l-5 5z" fill="#eee"/><circle cx="35" cy="28" r="1.4" fill="#222"/><rect x="0.5" y="0.5" width="55" height="38" fill="none" stroke="#222" stroke-width="1"/></svg>
<div class="t" style="left:1706px;top:850px;font-size:10px;color:#222;">Vert</div>
<div class="t" style="left:1859px;top:850px;font-size:10px;color:#222;">Ctrl+4</div>
<svg style="left:1623px;top:894px" width="14" height="10"><path d="M0.5 5 Q7 -2 13.5 5 Q7 12 0.5 5Z" fill="#2b2b2b"/><circle cx="7" cy="5" r="2.6" fill="#f0f0f0"/><circle cx="7" cy="5" r="1.6" fill="#2b2b2b"/><circle cx="6.3" cy="4.3" r="0.6" fill="#f0f0f0"/></svg>
<svg style="left:1644px;top:881px" width="56" height="39"><defs><linearGradient id="g881" x1="0" y1="0" x2="0.4" y2="1"><stop offset="0" stop-color="#8c8c8c"/><stop offset="1" stop-color="#707070"/></linearGradient><pattern id="p881" width="4" height="4" patternUnits="userSpaceOnUse"><rect width="4" height="4" fill="#a8a8a8"/><circle cx="2" cy="2" r="0.7" fill="#555"/></pattern></defs><rect width="56" height="39" fill="url(#g881)"/><path d="M31 15 L55 14 V38 H29Z" fill="url(#p881)"/><path d="M36 30 l5 -5 l3 2 l-5 5z" fill="#eee"/><circle cx="35" cy="28" r="1.4" fill="#222"/><rect x="0.5" y="0.5" width="55" height="38" fill="none" stroke="#222" stroke-width="1"/></svg>
<div class="t" style="left:1706px;top:894px;font-size:10px;color:#222;">Bleu</div>
<div class="t" style="left:1859px;top:894px;font-size:10px;color:#222;">Ctrl+5</div>
<div class="a" style="left:1625px;top:938px;width:12px;height:12px;background:#b8b8b8;border:1px solid #cfcfcf"></div>
<div class="a" style="left:1644px;top:925px;width:56px;height:39px;background:#fff;border:1px solid #222"></div>
<div class="t" style="left:1706px;top:939px;font-size:10px;color:#333;font-style:italic">Correction sélective 1 copie ...</div>
<div class="t" style="left:1859px;top:939px;font-size:10px;color:#222;">Ctrl+&amp;</div>
<div class="a" style="left:1618px;top:1134px;width:300px;height:26px;background:#f0f0f0;"></div>
<div class="a" style="left:1618px;top:1134px;width:300px;height:1px;background:#dadada;"></div>
<svg style="left:0;top:0" width="1920" height="1200"><circle cx="1795" cy="1146" r="5" fill="none" stroke="#333" stroke-width="1" stroke-dasharray="1.3 1.3"/><rect x="1816.5" y="1141" width="13" height="10" fill="#999"/><circle cx="1823" cy="1146" r="3" fill="#f0f0f0"/><path d="M1851.5 1142.5 h9 v9 h-5 l-4 -4z" fill="#c8c8c8" stroke="#333" stroke-width="1"/><path d="M1879.5 1142.5 h10 M1883 1140.5 h3 v2 M1880.5 1142.5 v9 h8 v-9 M1882.8 1144 v6 M1884.5 1144 v6 M1886.2 1144 v6" fill="none" stroke="#222" stroke-width="1"/></svg>
<div class="a" style="left:40px;top:1143px;width:232px;height:17px;background:#ececec;"></div>
<div class="a" style="left:40px;top:1143px;width:49px;height:17px;background:#f8f8f8;border:1px solid #d8d8d8"></div>
<div class="t" style="left:47px;top:1147px;font-size:10px;color:#222">66,67 %</div>
<div class="t" style="left:125px;top:1147px;font-size:10px;color:#444">Doc : 7,63 Mo/70,8 Mo</div>
<svg style="left:262px;top:1146px" width="6" height="10"><path d="M1 1 L5 5 L1 9" fill="none" stroke="#333" stroke-width="1"/></svg>
<div class="a" style="left:272px;top:1143px;width:1px;height:17px;background:#d0d0d0;"></div>
<div class="a" style="left:0;top:1160px;width:1920px;height:40px;background:linear-gradient(90deg,#1f5fa5 0px,#2b76bc 110px,#3a90d0 250px,#3b9ad3 600px,#2a8bcb 720px,#2475be 1100px,#2069b3 1300px,#1e5ea8 1500px,#1b4f90 1700px,#173f74 1850px,#163d70 1920px)"></div>
<div class="a" style="left:0px;top:1160px;width:1920px;height:1px;background:#1a2d45;"></div>
<div class="a" style="left:0px;top:1161px;width:1920px;height:1px;background:#6aa3d8;"></div>
<div class="a" style="left:0;top:1162px;width:1920px;height:14px;background:linear-gradient(180deg,rgba(255,255,255,0.10),rgba(255,255,255,0))"></div>
<svg style="left:0;top:1160px" width="1920" height="40"><path d="M1378 1 L1396 1 L1445 40 L1424 40Z" fill="#9fd0f2" opacity="0.55"/><path d="M1386 1 L1392 1 L1436 40 L1430 40Z" fill="#d8efff" opacity="0.5"/></svg>
<div class="a" style="left:60px;top:1161px;width:58px;height:39px;background:linear-gradient(180deg,rgba(255,255,255,0.16),rgba(255,255,255,0.06));border:1px solid rgba(10,30,60,0.55);box-shadow:inset 0 0 0 1px rgba(255,255,255,0.35);border-radius:3px"></div>
<div class="a" style="left:121px;top:1161px;width:59px;height:39px;background:linear-gradient(180deg,rgba(255,255,255,0.16),rgba(255,255,255,0.06));border:1px solid rgba(10,30,60,0.55);box-shadow:inset 0 0 0 1px rgba(255,255,255,0.35);border-radius:3px"></div>
<div class="a" style="left:308px;top:1161px;width:58px;height:39px;background:linear-gradient(180deg,rgba(255,255,255,0.16),rgba(255,255,255,0.06));border:1px solid rgba(10,30,60,0.55);box-shadow:inset 0 0 0 1px rgba(255,255,255,0.35);border-radius:3px"></div>
<div class="a" style="left:370px;top:1161px;width:58px;height:39px;background:linear-gradient(180deg,rgba(255,255,255,0.30),rgba(255,255,255,0.06));border:1px solid rgba(10,30,60,0.55);box-shadow:inset 0 0 0 1px rgba(255,255,255,0.35);border-radius:3px"></div>
<svg style="left:0;top:1160px" width="600" height="40">
<defs>
<linearGradient id="orb" x1="0" y1="0" x2="0" y2="1"><stop offset="0" stop-color="#a9c3d8"/><stop offset="0.45" stop-color="#3b6e9e"/><stop offset="0.55" stop-color="#0f3d70"/><stop offset="1" stop-color="#22b8ea"/></linearGradient>
<radialGradient id="ff" cx="0.55" cy="0.4" r="0.6"><stop offset="0" stop-color="#ffd23a"/><stop offset="0.5" stop-color="#ff8a1c"/><stop offset="1" stop-color="#d9431a"/></radialGradient>
<radialGradient id="glb" cx="0.6" cy="0.3" r="0.8"><stop offset="0" stop-color="#5fc6f2"/><stop offset="0.6" stop-color="#2a64c0"/><stop offset="1" stop-color="#2a2f86"/></radialGradient><linearGradient id="fox" x1="0" y1="0" x2="1" y2="0.3"><stop offset="0" stop-color="#e4421e"/><stop offset="0.55" stop-color="#f4771d"/><stop offset="1" stop-color="#ffd83a"/></linearGradient>
</defs>
<circle cx="27" cy="20" r="18.5" fill="url(#orb)" stroke="#8cc4ea" stroke-width="1" stroke-opacity="0.7"/><ellipse cx="27" cy="12" rx="15" ry="8" fill="#c8dcea" opacity="0.45"/><path d="M19.5 10 q4.5 -2 9 1 l-1.2 8.5 q-4.5 -2.5 -9.3 -0.5z" fill="#f0602a"/><path d="M29.5 11.5 q4.5 2.5 9 0.5 l-1.2 9 q-4.5 2 -9 -0.8z" fill="#8cc63f"/><path d="M17.8 20 q4.7 -2 9.3 0.5 l-1.4 9 q-4.5 -2.5 -9.3 -0.5z" fill="#38a8e8"/><path d="M28 21 q4.5 2.8 9.2 0.8 l-1.3 9 q-4.5 2 -9.3 -0.8z" fill="#fcc02a"/><circle cx="90.5" cy="17.5" r="10.5" fill="url(#glb)"/><path d="M104.5 19.5 A15 15 0 1 1 78 9 Q80 7 82 10 Q78 16 82 24 Q88 31 97 27 Q102 24 103 16 Q101 11 99 9 Q105 13 104.5 19.5Z" fill="url(#fox)"/><path d="M80 13 q4 -2 7 2 q-3 3 -2 7 q-4 -3 -5 -9z" fill="#f07a1f"/><circle cx="151" cy="20" r="14" fill="#1f55ad"/><circle cx="151" cy="20" r="11" fill="none" stroke="#3f86d6" stroke-width="2"/><circle cx="152" cy="19" r="7" fill="#1a3f8c"/><path d="M138.5 18 L149 13.5 L158.5 20 L154 32 L140 28Z" fill="#ece6dc"/><path d="M138.5 18 L150 24 L158.5 20" fill="none" stroke="#b8b0a2" stroke-width="1"/><rect x="199" y="5" width="28" height="27" fill="#d5202a"/><path d="M207 21 q-3 -7 3 -8 q3 -4 7 -1 q5 0 4 6 q0 4 -5 4 h-6 q-3 0 -3 -1z" fill="none" stroke="#fff" stroke-width="1.6"/>
<rect x="263" y="8" width="22" height="24" fill="#cfe6f7" opacity="0.7"/><rect x="283" y="8" width="2" height="24" fill="#fff" opacity="0.6"/><circle cx="273" cy="19" r="10" fill="#f3901e" stroke="#f7c36b" stroke-width="1"/><path d="M270 13.5 L279 19 L270 24.5Z" fill="#fff"/>
<rect x="322.5" y="5.5" width="28" height="27" fill="#172530" stroke="#b9d4e6" stroke-width="2"/><text x="326" y="27" font-family="Liberation Sans" font-size="17" fill="#c3dbeb">Lr</text>
<rect x="385.5" y="5.5" width="28" height="27" fill="#07202e" stroke="#2fc3ef" stroke-width="2"/><text x="388" y="27" font-family="Liberation Sans" font-size="17" fill="#33c5f0">Ps</text>
<rect x="447.5" y="5.5" width="28" height="27" fill="#2b0535" stroke="#e58af0" stroke-width="2"/><text x="450" y="27" font-family="Liberation Sans" font-size="17" fill="#e990f4">Pr</text>
<rect x="509.5" y="5.5" width="28" height="27" fill="#110b43" stroke="#a896f6" stroke-width="2"/><path d="M514 11 h3 v3 h3 v3 h3 v3 h3 v3 h3 v3 h3 v3 h-18z" fill="#b2a4fa"/>
</svg>
<div class="t" style="left:1649px;top:1172px;font-size:12px;color:#fff">FR</div>
<svg style="left:1670px;top:1160px" width="250" height="40">
<path d="M7 23 L11 18.5 L15 23Z" fill="#fff"/>
<rect x="30" y="12" width="1.5" height="17" fill="#fff"/><path d="M31.5 12.5 h6 l2 2 h5 l-2 3 l2 3 h-5 l-2 -2 h-6z" fill="#fff"/>
<path d="M50 28 q-3 -6 1 -10 q2 -4 6 -5 q4 0 6 2 q4 3 2 8 q-2 4 -6 5 q-5 2 -9 0z" fill="#f2801c"/><path d="M52 23 l4 7 h-8z" fill="#ffd21e"/><circle cx="58" cy="18" r="2.5" fill="none" stroke="#fff" stroke-width="1"/>
<path d="M76 13 l5 3 l-5 3 l-5 -3z M86 13 l5 3 l-5 3 l-5 -3z M76 19 l5 3 l-5 3 l-5 -3z M86 19 l5 3 l-5 3 l-5 -3z" fill="#fff" stroke="#333" stroke-width="0.5"/><circle cx="88" cy="26" r="4" fill="#3fae49"/><path d="M86 26 l1.5 1.5 l2.5 -3" fill="none" stroke="#fff" stroke-width="1"/>
<path d="M98 26h2v3h-2z M102 23h2v6h-2z M106 20h2v9h-2z M110 16h2v13h-2z M114 12h2v17h-2z" fill="#fff"/>
<path d="M122 17 h3 l5 -4 v15 l-5 -4 h-3z" fill="#fff"/><path d="M133 16 q2 4 0 8 M136 14 q3.5 6 0 12" fill="none" stroke="#fff" stroke-width="1.2"/>
</svg>
<div class="t" style="left:1842px;top:1166px;font-size:12px;color:#fff">09:57</div>
<div class="t" style="left:1825px;top:1183px;font-size:12px;color:#fff">20/07/2017</div>
<div class="a" style="left:1898px;top:1161px;width:22px;height:39px;background:linear-gradient(180deg,rgba(255,255,255,0.25),rgba(255,255,255,0.08));border:1px solid rgba(200,225,245,0.6);border-right:none"></div></body></html>
